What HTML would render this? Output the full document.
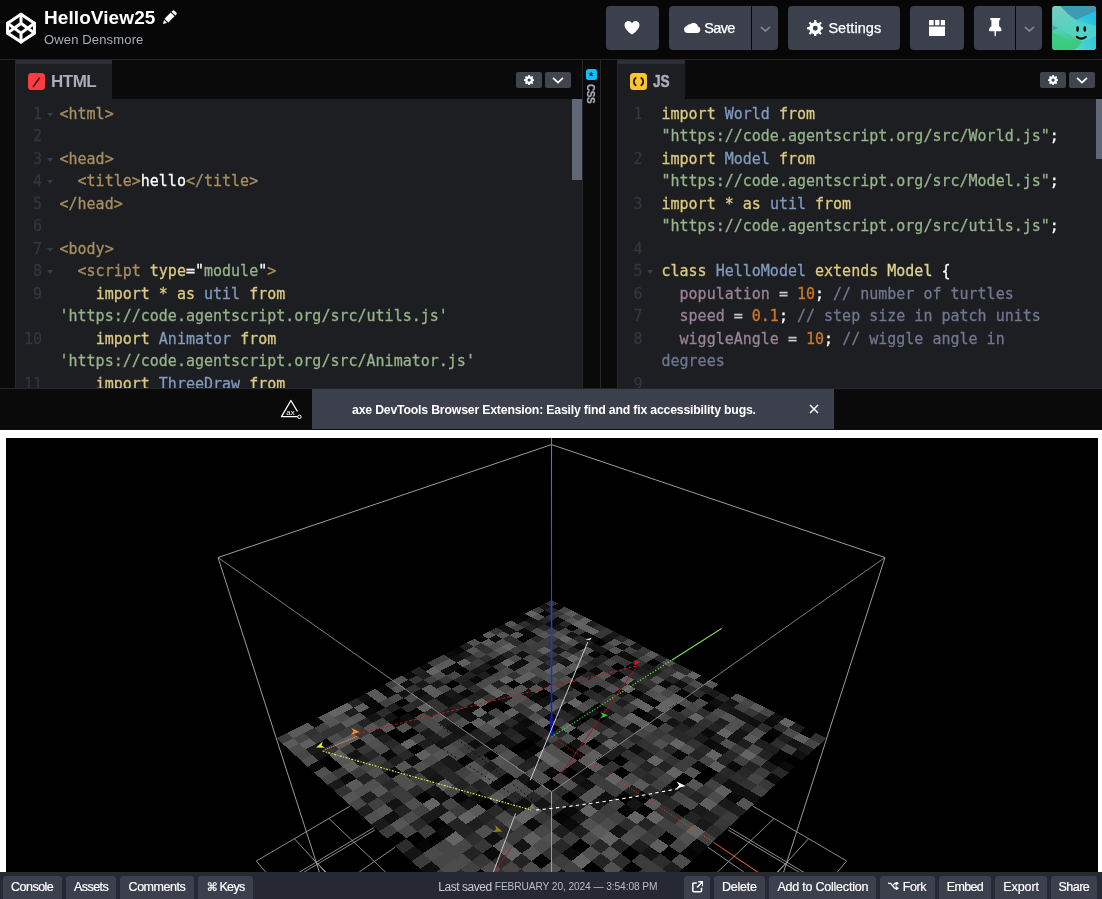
<!DOCTYPE html>
<html lang="en">
<head>
<meta charset="utf-8">
<title>HelloView25</title>
<style>
*{box-sizing:border-box;margin:0;padding:0}
html,body{width:1102px;height:899px;overflow:hidden;background:#0a0a0a;font-family:"Liberation Sans",sans-serif;color:#fff}
.code,.ln{-webkit-text-stroke:.28px currentColor}
#hdr,#edwrap,#banbar,#ftr{will-change:transform}
#hdr{position:absolute;left:0;top:0;width:1102px;height:60px;background:#070707;border-bottom:1px solid #25262b}
#logo{position:absolute;left:5px;top:12.3px;width:32px;height:32px}
#title{position:absolute;left:44px;top:5.5px;font-weight:bold;font-size:19px;line-height:24px;white-space:nowrap;letter-spacing:0.08px}
#author{position:absolute;left:44px;top:31.5px;font-size:13px;line-height:16px;color:#a9acba;white-space:nowrap;letter-spacing:0.15px}
.btn{position:absolute;top:6px;height:44px;background:#3c3f4c;border-radius:4px;color:#fff;font-size:14.5px;line-height:45px;white-space:nowrap;-webkit-text-stroke:.25px #fff}
.btn svg{position:absolute}
/* editors */
#edwrap{position:absolute;left:0;top:60px;width:1102px;height:329px;background:#0a0a0a;overflow:hidden;border-bottom:1px solid #25262b}
.ed{position:absolute;top:0;height:329px;background:#1d1e22;overflow:hidden}
.edbar{position:absolute;left:0;top:0;right:0;height:38.5px;background:#0a0a0a}
.tab{position:absolute;left:0;top:0;height:38.5px;background:#1d1e22;border-top:4px solid #2d2f36;color:#aaaebc;font-weight:bold;font-size:17px;line-height:36px;white-space:nowrap}
.tab .ic{position:absolute;left:12px;top:8.5px;width:17px;height:17px;border-radius:3.5px}
.sbtn{position:absolute;top:12px;height:16px;width:26px;background:#41444f;border-radius:2px}
.code{position:absolute;left:0;top:42.5px;font-family:"DejaVu Sans Mono","Liberation Mono",monospace;font-size:15px;line-height:22.5px;white-space:pre;color:#fff}
.ln{position:absolute;top:42.5px;font-family:"DejaVu Sans Mono","Liberation Mono",monospace;font-size:15px;line-height:22.5px;white-space:pre;color:#34363e;text-align:right}
.t{color:#a88f5f}.k{color:#ddca7e}.s{color:#96b38a}.v{color:#809bbd}.n{color:#d0782a}.c{color:#717790}.p{color:#9a8297}.a{color:#ddca7e}.w{color:#fff}.m{color:#e0d292}.o{color:#c8c8c8}
.fold{position:absolute;width:0;height:0;border-left:3.7px solid transparent;border-right:3.7px solid transparent;border-top:4.2px solid #3a3c44}
/* banner */
#banbar{position:absolute;left:0;top:389px;width:1102px;height:41px;background:#0a0a0a;border-bottom:1px solid #0e0e11}
#ban{position:absolute;left:312px;top:0;width:522px;height:40px;background:#3c3f4c;font-weight:bold;font-size:12.3px;letter-spacing:-.2px;line-height:42px;white-space:nowrap}
/* result */
#res{position:absolute;left:0;top:430px;width:1102px;height:442px;background:#fff}
#cv{position:absolute;left:6px;top:8px;width:1092px;height:434px;background:#000;overflow:hidden}
/* footer */
#ftr{position:absolute;left:0;top:872px;width:1102px;height:27px;background:#262833;border-top:2px solid #29292e}
.fb{position:absolute;top:1.5px;height:26px;background:#3c3f4c;border-radius:3px;color:#fff;font-size:12.5px;line-height:22px;white-space:nowrap;-webkit-text-stroke:.2px #fff}
</style>
</head>
<body>
<div id="hdr">
<svg id="logo" viewBox="0 0 100 100"><g fill="none" stroke="#fff" stroke-width="9.5" stroke-linejoin="round" stroke-linecap="round"><path d="M50 7L92 35V66L50 94L8 66V35Z"/><path d="M50 7V35M50 94V66M8 35L50 66L92 35M8 66L50 35L92 66"/></g></svg><svg style="position:absolute;left:162px;top:9px" width="16" height="16" viewBox="-1 -15 16 16"><g transform="rotate(-45)" fill="#fff"><path d="M0 0L3.6 -2.1V2.1Z"/><path d="M4.9 -2.7H13.600V2.7H4.9Z"/><path d="M14.6 -2.7H16.200Q17.5 -2.7 17.5 -1.400V1.400Q17.5 2.7 16.2 2.7H14.600Z"/></g></svg>
<div id="title">HelloView25</div>
<div id="author">Owen Densmore</div>

<div class="btn" style="left:605.5px;width:53.5px"><svg style="left:18.3px;top:15px" width="16" height="13.5" viewBox="0 0 16 13.5"><path d="M8 13.5C-1.8 6.8 -.4 1.2 3.4.2 5.6 -.4 7.3 .8 8 2.3 8.7 .8 10.4 -.4 12.6 .2 16.4 1.2 17.8 6.8 8 13.500z" fill="#fff"/></svg></div>
<div class="btn" style="left:669px;width:82.3px;border-radius:4px 0 0 4px"><svg style="left:15px;top:16.2px" width="17" height="11" viewBox="0 0 17 11"><path d="M3.6 11A3.6 3.6 0 0 1 2.9 3.9 3.1 3.1 0 0 1 6.2 2.3 4.6 4.6 0 0 1 14 4.6 3.3 3.3 0 0 1 13.6 11z" fill="#fff"/></svg><span style="position:absolute;left:35.2px;top:0;letter-spacing:-.6px">Save</span></div>
<div class="btn" style="left:752.2px;width:25.8px;border-radius:0 4px 4px 0"><svg style="left:7.5px;top:19.7px" width="11" height="7" viewBox="0 0 11 7"><path d="M.8 1l4.6 3.900L10 1" fill="none" stroke="#878b9b" stroke-width="1.5"/></svg></div>
<div class="btn" style="left:788.2px;width:111.8px"><svg style="left:18.7px;top:13.8px" width="16.5" height="16.5" viewBox="0 0 16 16"><path fill-rule="evenodd" d="M6.89 2.20L6.98 -0.04L9.02 -0.04L9.11 2.20L11.32 3.12L12.96 1.60L14.40 3.04L12.88 4.68L13.80 6.89L16.04 6.98L16.04 9.02L13.80 9.11L12.88 11.32L14.40 12.96L12.96 14.40L11.32 12.88L9.11 13.80L9.02 16.04L6.98 16.04L6.89 13.80L4.68 12.88L3.04 14.40L1.60 12.96L3.12 11.32L2.20 9.11L-0.04 9.02L-0.04 6.98L2.20 6.89L3.12 4.68L1.60 3.04L3.04 1.60L4.68 3.12ZM5.60 8.00a2.40 2.40 0 1 0 4.80 0a2.40 2.40 0 1 0 -4.80 0Z" fill="#fff"/></svg><span style="position:absolute;left:40.2px;top:0;letter-spacing:.07px">Settings</span></div>
<div class="btn" style="left:910px;width:54.2px"><svg style="left:18.8px;top:13.8px" width="16.5" height="16.4" viewBox="0 0 16.5 16.4"><path d="M.6 0h4.100v5.200H0V.6zM6.1 0h4.300v5.200H6.100zM11.8 0h4.100l.6.600v4.600h-4.700zM0 6.400h16.500v9q0 1-1 1H1q-1 0-1-1z" fill="#fff"/></svg></div>
<div class="btn" style="left:974px;width:41.2px;border-radius:4px 0 0 4px"><svg style="left:15px;top:12.300px" width="12.5" height="18.5" viewBox="0 0 12.5 18.5"><path d="M1.8 0H10.700Q11.2 0 11.2 .5V1.700Q11.2 2.2 10.7 2.200H10.100V8.300C11.6 9.2 12.5 10.6 12.5 12.200Q12.5 13.2 11.5 13.200H7V17.500L6.250 18.5 5.5 17.500V13.200H1Q0 13.2 0 12.200C0 10.6 .9 9.2 2.4 8.300V2.200H1.800Q1.3 2.2 1.3 1.700V.5Q1.3 0 1.8 0Z" fill="#fff"/></svg></div>
<div class="btn" style="left:1016px;width:26px;border-radius:0 4px 4px 0"><svg style="left:8px;top:20.3px" width="11" height="7" viewBox="0 0 11 7"><path d="M.8 1l4.6 3.900L10 1" fill="none" stroke="#878b9b" stroke-width="1.5"/></svg></div>
<svg style="position:absolute;left:1052px;top:6px;border-radius:3px" width="44.2" height="44" viewBox="0 0 44 44"><defs><linearGradient id="ag" x1="0" y1="0" x2="0.2" y2="1"><stop offset="0" stop-color="#7accc4"/><stop offset=".45" stop-color="#5fd0bc"/><stop offset="1" stop-color="#36c878"/></linearGradient><linearGradient id="ag2" x1="1" y1="0" x2="0" y2="1"><stop offset="0" stop-color="#16bdea"/><stop offset="1" stop-color="#58d8c8"/></linearGradient></defs><rect width="44" height="44" fill="url(#ag)"/><path d="M24 14L44 4V44H22L30 36z" fill="url(#ag2)"/><path d="M24 14L6 22 30 36 44 30V20z" fill="#56d6c6" opacity=".75"/><path d="M8 0H44V5L24 14 16 8z" fill="#3d9ab4"/><path d="M0 19L6 22 0 25z" fill="#4aa8a4"/><path d="M0 26L28 40 22 44H0z" fill="#39cc80" opacity=".8"/><ellipse cx="25.5" cy="23" rx="1.4" ry="2.9" fill="#08100f"/><ellipse cx="32.7" cy="23" rx="1.4" ry="2.9" fill="#08100f"/><path d="M24.7 30.800q4.5 3.6 9 0" fill="none" stroke="#08100f" stroke-width="2.2" stroke-linecap="round"/></svg>

</div>
<div id="edwrap">
<div class="ed" style="left:15px;width:567px;border-left:1px solid #26272c">
<div class="edbar"><div class="tab" style="width:96px"><span class="ic" style="background:#ff3c41"><svg width="17" height="17" viewBox="0 0 17 17" style="position:absolute;left:0;top:0"><path d="M4.9 14.100L11.7 4.7" stroke="#28090a" stroke-width="1.5" fill="none"/></svg></span><span style="position:absolute;left:35px;top:0;letter-spacing:-.5px">HTML</span></div>
<div class="sbtn" style="left:500px"><svg style="position:absolute;left:7.9px;top:2.9px" width="10.2" height="10.2" viewBox="0 0 16 16"><path fill-rule="evenodd" d="M6.53 1.87L6.73 -0.00L9.27 -0.00L9.47 1.87L11.29 2.63L12.76 1.45L14.55 3.24L13.37 4.71L14.13 6.53L16.00 6.73L16.00 9.27L14.13 9.47L13.37 11.29L14.55 12.76L12.76 14.55L11.29 13.37L9.47 14.13L9.27 16.00L6.73 16.00L6.53 14.13L4.71 13.37L3.24 14.55L1.45 12.76L2.63 11.29L1.87 9.47L-0.00 9.27L-0.00 6.73L1.87 6.53L2.63 4.71L1.45 3.24L3.24 1.45L4.71 2.63ZM5.50 8.00a2.50 2.50 0 1 0 5.00 0a2.50 2.50 0 1 0 -5.00 0Z" fill="#fff"/></svg></div>
<div class="sbtn" style="left:529px"><svg style="position:absolute;left:7px;top:4.5px" width="12" height="7" viewBox="0 0 12 7"><path d="M1 .9l5 4.700L11 .9" fill="none" stroke="#fff" stroke-width="1.8"/></svg></div>
</div>
<pre class="ln" style="left:0;width:26px">1
2
3
4
5
6
7
8
9

10

11
</pre><i class="fold" style="top:52.5px;left:30.6px"></i><i class="fold" style="top:97.5px;left:30.6px"></i><i class="fold" style="top:120.0px;left:30.6px"></i><i class="fold" style="top:187.5px;left:30.6px"></i><i class="fold" style="top:210.0px;left:30.6px"></i>
<pre class="code" style="left:43.5px"><span class="t">&lt;html&gt;</span>

<span class="t">&lt;head&gt;</span>
  <span class="t">&lt;title&gt;</span>hello<span class="t">&lt;/title&gt;</span>
<span class="t">&lt;/head&gt;</span>

<span class="t">&lt;body&gt;</span>
  <span class="t">&lt;script</span> <span class="a">type</span>="<span class="s">module</span>"<span class="t">&gt;</span>
    <span class="k">import</span> <span class="k">*</span> <span class="k">as</span> <span class="v">util</span> <span class="k">from</span>
<span class="s">'https://code.agentscript.org/src/utils.js'</span>
    <span class="k">import</span> <span class="v">Animator</span> <span class="k">from</span>
<span class="s">'https://code.agentscript.org/src/Animator.js'</span>
    <span class="k">import</span> <span class="v">ThreeDraw</span> <span class="k">from</span>
<span class="s">'https://code.agentscript.org/src/ThreeDraw.js'</span></pre>
<div style="position:absolute;left:556px;top:38.5px;width:10.5px;height:81px;background:#626778"></div>
</div><div class="ed" style="left:617px;width:489px;border-left:1px solid #26272c">
<div class="edbar"><div class="tab" style="width:67px"><span class="ic" style="background:#fcc633"><svg width="17" height="17" viewBox="0 0 17 17" style="position:absolute;left:0;top:0"><path d="M6.29 12.75A4.70 4.70 0 0 1 6.29 4.45M10.71 4.45A4.70 4.70 0 0 1 10.71 12.75" stroke="#231d00" stroke-width="1.8" fill="none"/></svg></span><span style="position:absolute;left:34.5px;top:0;display:inline-block;transform:scaleX(.8);transform-origin:0 0;-webkit-text-stroke:.5px #aaaebc">JS</span></div>
<div class="sbtn" style="left:422.3px"><svg style="position:absolute;left:7.9px;top:2.9px" width="10.2" height="10.2" viewBox="0 0 16 16"><path fill-rule="evenodd" d="M6.53 1.87L6.73 -0.00L9.27 -0.00L9.47 1.87L11.29 2.63L12.76 1.45L14.55 3.24L13.37 4.71L14.13 6.53L16.00 6.73L16.00 9.27L14.13 9.47L13.37 11.29L14.55 12.76L12.76 14.55L11.29 13.37L9.47 14.13L9.27 16.00L6.73 16.00L6.53 14.13L4.71 13.37L3.24 14.55L1.45 12.76L2.63 11.29L1.87 9.47L-0.00 9.27L-0.00 6.73L1.87 6.53L2.63 4.71L1.45 3.24L3.24 1.45L4.71 2.63ZM5.50 8.00a2.50 2.50 0 1 0 5.00 0a2.50 2.50 0 1 0 -5.00 0Z" fill="#fff"/></svg></div>
<div class="sbtn" style="left:451px"><svg style="position:absolute;left:7px;top:4.5px" width="12" height="7" viewBox="0 0 12 7"><path d="M1 .9l5 4.700L11 .9" fill="none" stroke="#fff" stroke-width="1.8"/></svg></div>
</div>
<pre class="ln" style="left:0;width:24.5px">1

2

3

4
5
6
7
8

9
10</pre><i class="fold" style="top:210.0px;left:29.1px"></i>
<pre class="code" style="left:43.5px"><span class="k">import</span> <span class="v">World</span> <span class="k">from</span>
<span class="s">"https://code.agentscript.org/src/World.js"</span>;
<span class="k">import</span> <span class="v">Model</span> <span class="k">from</span>
<span class="s">"https://code.agentscript.org/src/Model.js"</span>;
<span class="k">import</span> <span class="k">*</span> <span class="k">as</span> <span class="v">util</span> <span class="k">from</span>
<span class="s">"https://code.agentscript.org/src/utils.js"</span>;

<span class="k">class</span> <span class="v">HelloModel</span> <span class="k">extends</span> <span class="m">Model</span> {
  <span class="p">population</span> <span class="o">=</span> <span class="n">10</span>; <span class="c">// number of turtles</span>
  <span class="p">speed</span> <span class="o">=</span> <span class="n">0.1</span>; <span class="c">// step size in patch units</span>
  <span class="p">wiggleAngle</span> <span class="o">=</span> <span class="n">10</span>; <span class="c">// wiggle angle in</span>
<span class="c">degrees</span>

  <span class="c">// ======================</span></pre>
<div style="position:absolute;left:478px;top:38.5px;width:8px;height:60.5px;background:#626778"></div>
</div><div style="position:absolute;left:582px;top:0;width:19px;height:329px;background:#0a0a0a;border-left:1px solid #26272c;border-right:1px solid #26272c">
<span style="position:absolute;left:2.500px;top:8.5px;width:11.500px;height:11.500px;border-radius:2.500px;background:#0ebeff;color:#0a1a22;font-size:11px;line-height:15px;text-align:center;font-weight:bold">*</span>
<span style="position:absolute;left:1.200px;top:24px;writing-mode:vertical-rl;font-weight:bold;font-size:10px;line-height:13px;color:#aaaebc;letter-spacing:-.4px;-webkit-text-stroke:.25px #aaaebc">CSS</span>
</div>
</div>
<div id="banbar"><svg style="position:absolute;left:280px;top:9px" width="23" height="22" viewBox="0 0 23 22"><path d="M17.5 13.500L10.9 2.500L1.5 18.600H17.6" fill="none" stroke="#fff" stroke-width="1.3" stroke-linejoin="round"/><circle cx="19.4" cy="18.8" r="1.7" fill="none" stroke="#fff" stroke-width="1"/><text x="6.3" y="16.8" font-family="Liberation Sans,sans-serif" font-size="7.8" fill="#fff">ax</text></svg>
<div id="ban"><span style="position:absolute;left:40px;top:0">axe DevTools Browser Extension: Easily find and fix accessibility bugs.</span><svg style="position:absolute;left:497px;top:15px" width="10" height="10" viewBox="0 0 10 10"><path d="M1 1l8 8M9 1l-8 8" stroke="#fff" stroke-width="1.5" fill="none"/></svg></div></div>
<div id="res"><div id="cv"><svg width="1092" height="434" viewBox="6 438 1092 434" style="position:absolute;left:0;top:0;display:block">
<g shape-rendering="crispEdges">
<path fill="#000000" d="M463.1 666.9L469.8 671.2L461.7 675.5L455.0 671.2ZM453.5 679.9L460.3 684.3L451.9 688.8L445.1 684.3ZM401.1 707.7L407.8 712.6L398.6 717.6L391.9 712.6ZM398.6 717.6L405.4 722.6L395.9 727.8L389.1 722.6ZM329.1 755.0L335.7 760.7L325.0 766.6L318.4 760.7ZM395.9 727.8L402.9 733.1L393.2 738.4L386.3 733.1ZM335.7 760.7L342.4 766.6L331.7 772.5L325.0 766.6ZM412.3 727.8L419.4 733.1L409.9 738.4L402.9 733.1ZM402.9 733.1L409.9 738.4L400.2 743.8L393.2 738.4ZM513.8 679.9L521.1 684.3L513.2 688.8L505.9 684.3ZM600.4 638.9L607.8 642.7L601.1 646.6L593.7 642.7ZM497.0 698.1L504.4 702.8L496.1 707.7L488.7 702.8ZM488.7 702.8L496.1 707.7L487.6 712.6L480.3 707.7ZM417.0 743.8L424.3 749.4L414.6 755.0L407.4 749.4ZM504.4 702.8L511.9 707.7L503.6 712.6L496.1 707.7ZM470.3 722.6L477.8 727.8L468.9 733.1L461.4 727.8ZM543.8 688.8L551.5 693.4L543.7 698.1L536.1 693.4ZM617.3 662.7L625.2 666.9L618.3 671.2L610.4 666.9ZM581.9 684.3L589.8 688.8L582.4 693.4L574.5 688.8ZM582.4 693.4L590.4 698.1L582.9 702.8L574.9 698.1ZM492.2 749.4L500.2 755.0L491.1 760.7L483.1 755.0ZM551.5 722.6L559.7 727.8L551.5 733.1L543.3 727.8ZM526.5 738.4L534.7 743.8L526.1 749.4L517.9 743.8ZM517.9 743.8L526.1 749.4L517.3 755.0L509.1 749.4ZM583.4 712.6L591.7 717.6L584.0 722.6L575.6 717.6ZM398.1 831.4L406.3 838.6L395.0 846.0L386.9 838.6ZM599.4 712.6L607.8 717.6L600.2 722.6L591.7 717.6ZM507.5 772.5L516.0 778.6L506.7 784.8L498.3 778.6ZM417.3 831.4L425.6 838.6L414.6 846.0L406.3 838.6ZM487.6 797.5L496.2 804.0L486.4 810.7L477.8 804.0ZM436.5 831.4L445.0 838.6L434.1 846.0L425.6 838.6ZM638.6 707.7L647.3 712.6L640.0 717.6L631.3 712.6ZM593.2 738.4L601.9 743.8L593.9 749.4L585.1 743.8ZM568.9 766.6L577.9 772.5L569.2 778.6L560.3 772.5ZM677.1 702.8L686.1 707.7L679.2 712.6L670.2 707.7ZM718.7 684.3L727.7 688.8L721.4 693.4L712.4 688.8ZM706.0 693.4L715.0 698.1L708.5 702.8L699.4 698.1ZM619.9 755.0L629.2 760.7L621.2 766.6L611.9 760.7ZM569.6 791.0L578.9 797.5L569.9 804.0L560.6 797.5ZM621.2 766.6L630.6 772.5L622.5 778.6L613.0 772.5ZM623.8 791.0L633.6 797.5L625.2 804.0L615.4 797.5ZM641.9 791.0L651.9 797.5L643.7 804.0L633.6 797.5ZM580.5 838.6L590.6 846.0L581.2 853.5L571.1 846.0ZM675.7 778.6L685.8 784.8L678.1 791.0L667.9 784.8ZM708.3 766.6L718.5 772.5L711.2 778.6L700.9 772.5ZM700.9 772.5L711.2 778.6L703.7 784.8L693.5 778.6ZM591.4 861.2L602.0 869.0L592.3 877.0L581.8 869.0ZM766.2 733.1L776.4 738.4L770.0 743.8L759.8 738.4ZM629.8 846.0L640.5 853.5L631.4 861.2L620.7 853.5ZM805.3 727.8L815.8 733.1L809.7 738.4L799.2 733.1ZM791.0 755.0L801.8 760.7L795.4 766.6L784.6 760.7Z"/>
<path fill="#050505" d="M524.9 613.7L531.4 617.1L524.5 620.6L518.0 617.1ZM482.1 635.2L488.6 638.9L481.1 642.7L474.6 638.9ZM459.3 646.6L465.8 650.6L457.9 654.6L451.5 650.6ZM384.3 684.3L390.6 688.8L381.6 693.4L375.3 688.8ZM318.1 717.6L324.2 722.6L314.1 727.8L308.0 722.6ZM558.0 603.6L564.6 606.9L558.1 610.3L551.5 606.9ZM544.9 610.3L551.5 613.7L544.8 617.1L538.2 613.7ZM372.4 698.1L378.8 702.8L369.4 707.7L363.1 702.8ZM378.8 702.8L385.3 707.7L375.9 712.6L369.4 707.7ZM523.8 635.2L530.5 638.9L523.3 642.7L516.6 638.9ZM403.6 698.1L410.2 702.8L401.1 707.7L394.5 702.8ZM571.9 624.2L578.9 627.8L572.2 631.4L565.2 627.8ZM492.6 666.9L499.5 671.2L491.7 675.5L484.7 671.2ZM416.9 707.7L423.8 712.6L414.7 717.6L407.8 712.6ZM594.4 650.6L601.9 654.6L595.0 658.6L587.5 654.6ZM394.7 766.6L402.1 772.5L391.8 778.6L384.5 772.5ZM608.7 650.6L616.3 654.6L609.5 658.6L601.9 654.6ZM581.0 666.9L588.6 671.2L581.4 675.5L573.8 671.2ZM466.0 755.0L473.8 760.7L464.4 766.6L456.6 760.7ZM618.3 671.2L626.3 675.5L619.4 679.9L611.3 675.5ZM424.9 791.0L432.8 797.5L422.5 804.0L414.6 797.5ZM653.1 658.6L661.1 662.7L654.6 666.9L646.5 662.7ZM535.0 733.1L543.2 738.4L534.7 743.8L526.5 738.4ZM598.6 702.8L606.9 707.7L599.4 712.6L591.1 707.7ZM534.7 743.8L543.0 749.4L534.4 755.0L526.1 749.4ZM461.1 791.0L469.4 797.5L459.3 804.0L451.1 797.5ZM635.8 688.8L644.2 693.4L637.2 698.1L628.7 693.4ZM438.7 817.4L447.1 824.4L436.5 831.4L428.1 824.4ZM568.3 743.8L576.9 749.4L568.6 755.0L560.0 749.4ZM425.6 838.6L434.1 846.0L423.0 853.5L414.6 846.0ZM652.7 698.1L661.4 702.8L654.4 707.7L645.7 702.8ZM681.7 688.8L690.5 693.4L683.9 698.1L675.1 693.4ZM551.5 778.6L560.5 784.8L551.5 791.0L542.5 784.8ZM727.7 688.8L736.9 693.4L730.6 698.1L721.4 693.4ZM708.5 702.8L717.7 707.7L711.1 712.6L701.9 707.7ZM560.8 810.7L570.3 817.4L561.0 824.4L551.5 817.4ZM480.9 869.0L490.3 877.0L479.3 885.2L469.9 877.0ZM541.6 853.5L551.5 861.2L541.4 869.0L531.5 861.2ZM625.2 804.0L635.2 810.7L626.7 817.4L616.6 810.7ZM683.4 772.5L693.5 778.6L685.8 784.8L675.7 778.6ZM643.7 804.0L653.9 810.7L645.5 817.4L635.2 810.7ZM772.6 727.8L782.7 733.1L776.4 738.4L766.2 733.1ZM680.5 804.0L691.1 810.7L683.1 817.4L672.5 810.7ZM666.5 831.4L677.4 838.6L668.9 846.0L658.0 838.6ZM631.4 861.2L642.3 869.0L633.1 877.0L622.1 869.0ZM780.4 749.4L791.0 755.0L784.6 760.7L773.9 755.0ZM773.9 755.0L784.6 760.7L778.0 766.6L767.3 760.7ZM668.9 846.0L680.0 853.5L671.3 861.2L660.2 853.5ZM688.4 846.0L699.8 853.5L691.3 861.2L680.0 853.5Z"/>
<path fill="#0a0a0a" d="M518.0 617.1L524.5 620.6L517.6 624.2L511.1 620.6ZM451.5 650.6L457.9 654.6L449.9 658.6L443.5 654.6ZM427.2 662.7L433.6 666.9L425.3 671.2L418.9 666.9ZM410.5 671.2L416.8 675.5L408.2 679.9L401.9 675.5ZM390.6 688.8L397.0 693.4L388.0 698.1L381.6 693.4ZM524.1 627.8L530.8 631.4L523.8 635.2L517.1 631.4ZM456.5 662.7L463.1 666.9L455.0 671.2L448.4 666.9ZM369.4 707.7L375.9 712.6L366.4 717.6L359.9 712.6ZM558.2 617.1L565.0 620.6L558.3 624.2L551.5 620.6ZM551.5 620.6L558.3 624.2L551.5 627.8L544.7 624.2ZM530.8 631.4L537.6 635.2L530.5 638.9L523.8 635.2ZM326.6 738.4L333.0 743.8L322.6 749.4L316.2 743.8ZM493.5 658.6L500.3 662.7L492.6 666.9L485.7 662.7ZM476.7 675.5L483.6 679.9L475.5 684.3L468.6 679.9ZM318.4 760.7L325.0 766.6L314.1 772.5L307.6 766.6ZM467.2 688.8L474.3 693.4L465.8 698.1L458.8 693.4ZM585.9 631.4L593.1 635.2L586.4 638.9L579.2 635.2ZM593.1 635.2L600.4 638.9L593.7 642.7L586.4 638.9ZM473.0 702.8L480.3 707.7L471.7 712.6L464.4 707.7ZM390.4 749.4L397.5 755.0L387.5 760.7L380.4 755.0ZM349.3 772.5L356.3 778.6L345.5 784.8L338.6 778.6ZM536.1 693.4L543.7 698.1L535.8 702.8L528.1 698.1ZM595.7 666.9L603.5 671.2L596.4 675.5L588.6 671.2ZM574.1 679.9L581.9 684.3L574.5 688.8L566.7 684.3ZM630.7 654.6L638.5 658.6L631.9 662.7L624.0 658.6ZM527.4 717.6L535.3 722.6L526.9 727.8L519.0 722.6ZM493.2 738.4L501.1 743.8L492.2 749.4L484.3 743.8ZM631.9 662.7L639.9 666.9L633.2 671.2L625.2 666.9ZM597.1 684.3L605.1 688.8L597.8 693.4L589.8 688.8ZM567.2 702.8L575.2 707.7L567.5 712.6L559.4 707.7ZM551.5 712.6L559.5 717.6L551.5 722.6L543.5 717.6ZM526.9 727.8L535.0 733.1L526.5 738.4L518.5 733.1ZM575.6 717.6L584.0 722.6L576.1 727.8L567.7 722.6ZM526.1 749.4L534.4 755.0L525.6 760.7L517.3 755.0ZM576.1 727.8L584.5 733.1L576.5 738.4L568.0 733.1ZM498.3 778.6L506.7 784.8L497.3 791.0L488.8 784.8ZM479.2 791.0L487.6 797.5L477.8 804.0L469.4 797.5ZM664.6 679.9L673.1 684.3L666.4 688.8L657.9 684.3ZM447.1 824.4L455.6 831.4L445.0 838.6L436.5 831.4ZM576.9 749.4L585.7 755.0L577.4 760.7L568.6 755.0ZM551.5 766.6L560.3 772.5L551.5 778.6L542.7 772.5ZM533.8 778.6L542.5 784.8L533.4 791.0L524.6 784.8ZM505.9 797.5L514.6 804.0L505.0 810.7L496.2 804.0ZM701.1 675.5L709.8 679.9L703.5 684.3L694.8 679.9ZM647.3 712.6L656.1 717.6L648.9 722.6L640.0 717.6ZM690.5 693.4L699.4 698.1L692.8 702.8L683.9 698.1ZM656.1 717.6L665.1 722.6L657.9 727.8L648.9 722.6ZM602.8 755.0L611.9 760.7L603.8 766.6L594.7 760.7ZM586.3 766.6L595.5 772.5L587.0 778.6L577.9 772.5ZM532.7 817.4L542.0 824.4L532.3 831.4L523.0 824.4ZM492.8 846.0L502.1 853.5L491.6 861.2L482.3 853.5ZM569.9 804.0L579.4 810.7L570.3 817.4L560.8 810.7ZM570.3 817.4L580.0 824.4L570.7 831.4L561.0 824.4ZM707.1 727.8L716.7 733.1L709.8 738.4L700.1 733.1ZM678.7 749.4L688.4 755.0L681.0 760.7L671.3 755.0ZM709.8 738.4L719.6 743.8L712.6 749.4L702.8 743.8ZM571.1 846.0L581.2 853.5L571.5 861.2L561.4 853.5ZM698.2 760.7L708.3 766.6L700.9 772.5L690.9 766.6ZM768.8 717.6L778.8 722.6L772.6 727.8L762.6 722.6ZM732.8 760.7L743.1 766.6L736.1 772.5L725.7 766.6ZM602.0 869.0L612.7 877.0L603.1 885.2L592.3 877.0ZM732.3 791.0L743.2 797.5L735.8 804.0L724.9 797.5ZM784.6 760.7L795.4 766.6L788.9 772.5L778.0 766.6ZM771.3 772.5L782.2 778.6L775.4 784.8L764.4 778.6ZM696.7 838.6L708.0 846.0L699.8 853.5L688.4 846.0Z"/>
<path fill="#0f0f0f" d="M504.0 624.2L510.5 627.8L503.3 631.4L496.8 627.8ZM366.1 693.4L372.4 698.1L363.1 702.8L356.8 698.1ZM496.0 635.2L502.6 638.9L495.2 642.7L488.6 638.9ZM457.9 654.6L464.5 658.6L456.5 662.7L449.9 658.6ZM408.2 679.9L414.7 684.3L405.9 688.8L399.5 684.3ZM448.4 666.9L455.0 671.2L446.8 675.5L440.2 671.2ZM421.3 688.8L427.9 693.4L419.1 698.1L412.5 693.4ZM522.9 650.6L529.9 654.6L522.5 658.6L515.5 654.6ZM443.4 693.4L450.3 698.1L441.6 702.8L434.7 698.1ZM407.8 712.6L414.7 717.6L405.4 722.6L398.6 717.6ZM359.9 738.4L366.6 743.8L356.5 749.4L349.8 743.8ZM522.5 658.6L529.6 662.7L522.0 666.9L515.0 662.7ZM515.0 662.7L522.0 666.9L514.4 671.2L507.3 666.9ZM450.3 698.1L457.3 702.8L448.6 707.7L441.6 702.8ZM579.7 642.7L587.0 646.6L580.1 650.6L572.8 646.6ZM464.4 707.7L471.7 712.6L463.0 717.6L455.7 712.6ZM471.7 712.6L479.1 717.6L470.3 722.6L463.0 717.6ZM414.6 755.0L422.0 760.7L412.1 766.6L404.8 760.7ZM621.9 642.7L629.5 646.6L623.0 650.6L615.3 646.6ZM573.8 671.2L581.4 675.5L574.1 679.9L566.5 675.5ZM623.0 650.6L630.7 654.6L624.0 658.6L616.3 654.6ZM551.5 693.4L559.3 698.1L551.5 702.8L543.7 698.1ZM476.5 738.4L484.3 743.8L475.2 749.4L467.5 743.8ZM519.0 722.6L526.9 727.8L518.5 733.1L510.6 727.8ZM502.0 733.1L509.8 738.4L501.1 743.8L493.2 738.4ZM509.8 738.4L517.9 743.8L509.1 749.4L501.1 743.8ZM393.3 810.7L401.2 817.4L390.2 824.4L382.4 817.4ZM443.0 791.0L451.1 797.5L440.9 804.0L432.8 797.5ZM679.7 679.9L688.3 684.3L681.7 688.8L673.1 684.3ZM524.1 797.5L533.1 804.0L523.6 810.7L514.6 804.0ZM431.7 861.2L440.5 869.0L429.1 877.0L420.3 869.0ZM494.0 831.4L503.1 838.6L492.8 846.0L483.7 838.6ZM635.5 743.8L644.8 749.4L637.0 755.0L627.8 749.4ZM587.0 778.6L596.3 784.8L587.7 791.0L578.4 784.8ZM715.0 698.1L724.2 702.8L717.7 707.7L708.5 702.8ZM605.7 791.0L615.4 797.5L606.8 804.0L597.1 797.5ZM752.7 717.6L762.6 722.6L756.2 727.8L746.3 722.6ZM719.6 743.8L729.5 749.4L722.6 755.0L712.6 749.4ZM561.6 869.0L571.9 877.0L561.8 885.2L551.5 877.0ZM775.0 712.6L784.9 717.6L778.8 722.6L768.8 717.6ZM729.0 778.6L739.6 784.8L732.3 791.0L721.7 784.8ZM739.6 784.8L750.4 791.0L743.2 797.5L732.3 791.0ZM797.4 749.4L808.1 755.0L801.8 760.7L791.0 755.0ZM750.4 791.0L761.4 797.5L754.2 804.0L743.2 797.5Z"/>
<path fill="#141414" d="M545.0 603.6L551.5 606.9L544.9 610.3L538.4 606.9ZM531.4 617.1L538.0 620.6L531.1 624.2L524.5 620.6ZM510.5 627.8L517.1 631.4L509.9 635.2L503.3 631.4ZM405.9 688.8L412.5 693.4L403.6 698.1L397.0 693.4ZM375.9 712.6L382.5 717.6L372.9 722.6L366.4 717.6ZM558.3 624.2L565.2 627.8L558.4 631.4L551.5 627.8ZM501.1 654.6L508.0 658.6L500.3 662.7L493.5 658.6ZM477.8 666.9L484.7 671.2L476.7 675.5L469.8 671.2ZM391.9 712.6L398.6 717.6L389.1 722.6L382.5 717.6ZM322.6 749.4L329.1 755.0L318.4 760.7L312.0 755.0ZM379.6 727.8L386.3 733.1L376.6 738.4L369.8 733.1ZM572.2 631.4L579.2 635.2L572.5 638.9L565.4 635.2ZM458.8 693.4L465.8 698.1L457.3 702.8L450.3 698.1ZM356.5 749.4L363.3 755.0L353.0 760.7L346.2 755.0ZM607.0 635.2L614.4 638.9L607.8 642.7L600.4 638.9ZM593.7 642.7L601.1 646.6L594.4 650.6L587.0 646.6ZM566.0 658.6L573.4 662.7L566.2 666.9L558.8 662.7ZM528.9 679.9L536.3 684.3L528.5 688.8L521.1 684.3ZM505.2 693.4L512.6 698.1L504.4 702.8L497.0 698.1ZM454.1 722.6L461.4 727.8L452.4 733.1L445.1 727.8ZM601.1 646.6L608.7 650.6L601.9 654.6L594.4 650.6ZM544.0 679.9L551.5 684.3L543.8 688.8L536.3 684.3ZM528.5 688.8L536.1 693.4L528.1 698.1L520.6 693.4ZM461.4 727.8L468.9 733.1L459.9 738.4L452.4 733.1ZM443.2 738.4L450.7 743.8L441.3 749.4L433.8 743.8ZM636.0 642.7L643.7 646.6L637.2 650.6L629.5 646.6ZM543.7 698.1L551.5 702.8L543.6 707.7L535.8 702.8ZM519.6 712.6L527.4 717.6L519.0 722.6L511.3 717.6ZM502.8 722.6L510.6 727.8L502.0 733.1L494.2 727.8ZM437.2 772.5L445.0 778.6L435.1 784.8L427.3 778.6ZM396.3 797.5L404.1 804.0L393.3 810.7L385.6 804.0ZM435.1 784.8L443.0 791.0L432.8 797.5L424.9 791.0ZM620.5 688.8L628.7 693.4L621.6 698.1L613.3 693.4ZM591.1 707.7L599.4 712.6L591.7 717.6L583.4 712.6ZM469.4 797.5L477.8 804.0L467.8 810.7L459.3 804.0ZM644.2 693.4L652.7 698.1L645.7 702.8L637.2 698.1ZM607.8 717.6L616.4 722.6L608.8 727.8L600.2 722.6ZM576.5 738.4L585.1 743.8L576.9 749.4L568.3 743.8ZM525.1 772.5L533.8 778.6L524.6 784.8L516.0 778.6ZM414.6 846.0L423.0 853.5L411.7 861.2L403.2 853.5ZM632.7 722.6L641.6 727.8L634.1 733.1L625.2 727.8ZM577.4 760.7L586.3 766.6L577.9 772.5L568.9 766.6ZM577.9 772.5L587.0 778.6L578.4 784.8L569.2 778.6ZM542.4 797.5L551.5 804.0L542.2 810.7L533.1 804.0ZM672.2 717.6L681.4 722.6L674.3 727.8L665.1 722.6ZM688.3 717.6L697.6 722.6L690.7 727.8L681.4 722.6ZM522.5 838.6L531.9 846.0L521.8 853.5L512.4 846.0ZM730.6 698.1L739.9 702.8L733.6 707.7L724.2 702.8ZM733.6 707.7L743.1 712.6L736.6 717.6L727.1 712.6ZM743.1 712.6L752.7 717.6L746.3 722.6L736.6 717.6ZM633.6 797.5L643.7 804.0L635.2 810.7L625.2 804.0ZM739.8 727.8L749.7 733.1L743.1 738.4L733.2 733.1ZM733.2 733.1L743.1 738.4L736.4 743.8L726.4 738.4ZM667.9 784.8L678.1 791.0L670.2 797.5L660.0 791.0ZM617.9 824.4L628.2 831.4L619.3 838.6L609.0 831.4ZM649.3 846.0L660.2 853.5L651.4 861.2L640.5 853.5ZM793.1 738.4L803.6 743.8L797.4 749.4L786.8 743.8Z"/>
<path fill="#191919" d="M465.8 650.6L472.3 654.6L464.5 658.6L457.9 654.6ZM538.0 620.6L544.7 624.2L537.8 627.8L531.1 624.2ZM423.3 679.9L429.9 684.3L421.3 688.8L414.7 684.3ZM438.4 679.9L445.1 684.3L436.6 688.8L429.9 684.3ZM316.2 743.8L322.6 749.4L312.0 755.0L305.6 749.4ZM485.7 662.7L492.6 666.9L484.7 671.2L477.8 666.9ZM427.9 693.4L434.7 698.1L425.9 702.8L419.1 698.1ZM451.9 688.8L458.8 693.4L450.3 698.1L443.4 693.4ZM414.7 717.6L421.6 722.6L412.3 727.8L405.4 722.6ZM558.6 646.6L565.8 650.6L558.7 654.6L551.5 650.6ZM428.7 727.8L435.9 733.1L426.5 738.4L419.4 733.1ZM338.6 778.6L345.5 784.8L334.5 791.0L327.6 784.8ZM613.5 631.4L620.9 635.2L614.4 638.9L607.0 635.2ZM487.6 712.6L495.2 717.6L486.6 722.6L479.1 717.6ZM452.4 733.1L459.9 738.4L450.7 743.8L443.2 738.4ZM448.8 755.0L456.6 760.7L447.0 766.6L439.3 760.7ZM429.6 766.6L437.2 772.5L427.3 778.6L419.6 772.5ZM456.6 760.7L464.4 766.6L454.8 772.5L447.0 766.6ZM611.3 675.5L619.4 679.9L612.3 684.3L604.3 679.9ZM382.4 817.4L390.2 824.4L379.0 831.4L371.2 824.4ZM646.5 662.7L654.6 666.9L648.0 671.2L639.9 666.9ZM575.2 707.7L583.4 712.6L575.6 717.6L567.5 712.6ZM543.2 738.4L551.5 743.8L543.0 749.4L534.7 743.8ZM440.9 804.0L449.1 810.7L438.7 817.4L430.5 810.7ZM430.5 810.7L438.7 817.4L428.1 824.4L419.9 817.4ZM606.9 707.7L615.4 712.6L607.8 717.6L599.4 712.6ZM712.4 688.8L721.4 693.4L715.0 698.1L706.0 693.4ZM724.2 702.8L733.6 707.7L727.1 712.6L717.7 707.7ZM597.1 797.5L606.8 804.0L598.0 810.7L588.4 804.0ZM579.4 810.7L589.1 817.4L580.0 824.4L570.3 817.4ZM700.1 733.1L709.8 738.4L702.8 743.8L693.1 738.4ZM698.9 804.0L709.7 810.7L701.8 817.4L691.1 810.7ZM767.3 760.7L778.0 766.6L771.3 772.5L760.6 766.6ZM724.9 797.5L735.8 804.0L728.3 810.7L717.4 804.0ZM701.8 817.4L712.8 824.4L704.9 831.4L693.9 824.4ZM803.6 743.8L814.3 749.4L808.1 755.0L797.4 749.4Z"/>
<path fill="#1e1e1e" d="M467.0 642.7L473.5 646.6L465.8 650.6L459.3 646.6ZM425.3 671.2L431.8 675.5L423.3 679.9L416.8 675.5ZM353.6 707.7L359.9 712.6L350.3 717.6L344.0 712.6ZM394.5 702.8L401.1 707.7L391.9 712.6L385.3 707.7ZM484.7 671.2L491.7 675.5L483.6 679.9L476.7 675.5ZM468.6 679.9L475.5 684.3L467.2 688.8L460.3 684.3ZM591.9 620.6L599.0 624.2L592.5 627.8L585.4 624.2ZM386.3 733.1L393.2 738.4L383.4 743.8L376.6 738.4ZM482.5 688.8L489.7 693.4L481.4 698.1L474.3 693.4ZM448.6 707.7L455.7 712.6L446.9 717.6L439.8 712.6ZM363.3 755.0L370.2 760.7L359.9 766.6L353.0 760.7ZM558.7 654.6L566.0 658.6L558.8 662.7L551.5 658.6ZM544.2 662.7L551.5 666.9L544.1 671.2L536.8 666.9ZM446.9 717.6L454.1 722.6L445.1 727.8L437.9 722.6ZM435.9 733.1L443.2 738.4L433.8 743.8L426.5 738.4ZM426.5 738.4L433.8 743.8L424.3 749.4L417.0 743.8ZM397.5 755.0L404.8 760.7L394.7 766.6L387.5 760.7ZM595.0 658.6L602.7 662.7L595.7 666.9L588.0 662.7ZM477.8 727.8L485.4 733.1L476.5 738.4L468.9 733.1ZM370.7 791.0L378.1 797.5L367.2 804.0L359.8 797.5ZM566.7 684.3L574.5 688.8L566.9 693.4L559.2 688.8ZM367.2 804.0L374.7 810.7L363.6 817.4L356.1 810.7ZM639.9 666.9L648.0 671.2L641.3 675.5L633.2 671.2ZM605.1 688.8L613.3 693.4L606.0 698.1L597.8 693.4ZM491.1 760.7L499.2 766.6L490.0 772.5L481.8 766.6ZM654.6 666.9L662.8 671.2L656.2 675.5L648.0 671.2ZM634.4 679.9L642.7 684.3L635.8 688.8L627.5 684.3ZM621.6 698.1L630.0 702.8L622.7 707.7L614.3 702.8ZM534.4 755.0L542.9 760.7L534.1 766.6L525.6 760.7ZM476.3 817.4L485.1 824.4L474.8 831.4L466.1 824.4ZM654.4 707.7L663.2 712.6L656.1 717.6L647.3 712.6ZM514.6 804.0L523.6 810.7L513.9 817.4L505.0 810.7ZM703.5 684.3L712.4 688.8L706.0 693.4L697.1 688.8ZM618.7 743.8L627.8 749.4L619.9 755.0L610.8 749.4ZM610.8 749.4L619.9 755.0L611.9 760.7L602.8 755.0ZM578.4 784.8L587.7 791.0L578.9 797.5L569.6 791.0ZM644.8 749.4L654.2 755.0L646.4 760.7L637.0 755.0ZM578.9 797.5L588.4 804.0L579.4 810.7L569.9 804.0ZM561.0 824.4L570.7 831.4L561.2 838.6L551.5 831.4ZM720.5 717.6L730.1 722.6L723.4 727.8L713.9 722.6ZM632.1 784.8L641.9 791.0L633.6 797.5L623.8 791.0ZM580.0 824.4L589.8 831.4L580.5 838.6L570.7 831.4ZM716.7 733.1L726.4 738.4L719.6 743.8L709.8 738.4ZM743.1 738.4L753.2 743.8L746.5 749.4L736.4 743.8ZM759.8 738.4L770.0 743.8L763.5 749.4L753.2 743.8ZM638.6 838.6L649.3 846.0L640.5 853.5L629.8 846.0ZM795.0 722.6L805.3 727.8L799.2 733.1L788.9 727.8ZM782.7 733.1L793.1 738.4L786.8 743.8L776.4 738.4ZM770.0 743.8L780.4 749.4L773.9 755.0L763.5 749.4ZM622.1 869.0L633.1 877.0L623.7 885.2L612.7 877.0ZM709.7 810.7L720.6 817.4L712.8 824.4L701.8 817.4ZM735.8 804.0L746.9 810.7L739.4 817.4L728.3 810.7ZM671.3 861.2L682.7 869.0L673.9 877.0L662.5 869.0Z"/>
<path fill="#232323" d="M418.9 666.9L425.3 671.2L416.8 675.5L410.5 671.2ZM356.8 698.1L363.1 702.8L353.6 707.7L347.4 702.8ZM551.5 606.9L558.1 610.3L551.5 613.7L544.9 610.3ZM544.8 617.1L551.5 620.6L544.7 624.2L538.0 620.6ZM531.1 624.2L537.8 627.8L530.8 631.4L524.1 627.8ZM366.4 717.6L372.9 722.6L363.2 727.8L356.7 722.6ZM508.6 650.6L515.5 654.6L508.0 658.6L501.1 654.6ZM469.8 671.2L476.7 675.5L468.6 679.9L461.7 675.5ZM461.7 675.5L468.6 679.9L460.3 684.3L453.5 679.9ZM544.3 654.6L551.5 658.6L544.2 662.7L537.0 658.6ZM498.7 679.9L505.9 684.3L497.9 688.8L490.7 684.3ZM474.3 693.4L481.4 698.1L473.0 702.8L465.8 698.1ZM457.3 702.8L464.4 707.7L455.7 712.6L448.6 707.7ZM586.4 638.9L593.7 642.7L587.0 646.6L579.7 642.7ZM572.8 646.6L580.1 650.6L573.1 654.6L565.8 650.6ZM366.9 772.5L374.0 778.6L363.4 784.8L356.3 778.6ZM601.9 654.6L609.5 658.6L602.7 662.7L595.0 658.6ZM412.1 766.6L419.6 772.5L409.5 778.6L402.1 772.5ZM588.6 671.2L596.4 675.5L589.2 679.9L581.4 675.5ZM485.4 733.1L493.2 738.4L484.3 743.8L476.5 738.4ZM439.3 760.7L447.0 766.6L437.2 772.5L429.6 766.6ZM510.6 727.8L518.5 733.1L509.8 738.4L502.0 733.1ZM535.3 722.6L543.3 727.8L535.0 733.1L526.9 727.8ZM404.1 804.0L411.9 810.7L401.2 817.4L393.3 810.7ZM462.8 778.6L470.9 784.8L461.1 791.0L453.0 784.8ZM648.0 671.2L656.2 675.5L649.5 679.9L641.3 675.5ZM480.5 778.6L488.8 784.8L479.2 791.0L470.9 784.8ZM642.7 684.3L651.1 688.8L644.2 693.4L635.8 688.8ZM525.6 760.7L534.1 766.6L525.1 772.5L516.7 766.6ZM671.2 675.5L679.7 679.9L673.1 684.3L664.6 679.9ZM457.5 817.4L466.1 824.4L455.6 831.4L447.1 824.4ZM616.4 722.6L625.2 727.8L617.6 733.1L608.8 727.8ZM486.4 810.7L495.1 817.4L485.1 824.4L476.3 817.4ZM466.1 824.4L474.8 831.4L464.4 838.6L455.6 831.4ZM473.2 846.0L482.3 853.5L471.6 861.2L462.5 853.5ZM681.4 722.6L690.7 727.8L683.6 733.1L674.3 727.8ZM646.4 760.7L656.0 766.6L648.2 772.5L638.6 766.6ZM521.8 853.5L531.5 861.2L521.2 869.0L511.6 861.2ZM713.9 722.6L723.4 727.8L716.7 733.1L707.1 727.8ZM663.7 760.7L673.4 766.6L665.8 772.5L656.0 766.6ZM695.6 749.4L705.5 755.0L698.2 760.7L688.4 755.0ZM759.0 712.6L768.8 717.6L762.6 722.6L752.7 717.6ZM746.3 722.6L756.2 727.8L749.7 733.1L739.8 727.8ZM660.0 791.0L670.2 797.5L662.1 804.0L651.9 797.5ZM722.6 755.0L732.8 760.7L725.7 766.6L715.5 760.7ZM645.5 817.4L655.9 824.4L647.4 831.4L636.9 824.4ZM619.3 838.6L629.8 846.0L620.7 853.5L610.2 846.0ZM600.9 853.5L611.4 861.2L602.0 869.0L591.4 861.2ZM718.5 772.5L729.0 778.6L721.7 784.8L711.2 778.6ZM696.2 791.0L706.7 797.5L698.9 804.0L688.4 797.5ZM763.5 749.4L773.9 755.0L767.3 760.7L756.8 755.0ZM750.0 760.7L760.6 766.6L753.7 772.5L743.1 766.6ZM691.1 810.7L701.8 817.4L693.9 824.4L683.1 817.4Z"/>
<path fill="#282828" d="M544.7 624.2L551.5 627.8L544.6 631.4L537.8 627.8ZM565.0 620.6L571.9 624.2L565.2 627.8L558.3 624.2ZM537.6 635.2L544.5 638.9L537.4 642.7L530.5 638.9ZM419.1 698.1L425.9 702.8L416.9 707.7L410.2 702.8ZM558.5 638.9L565.6 642.7L558.6 646.6L551.5 642.7ZM432.8 707.7L439.8 712.6L430.8 717.6L423.8 712.6ZM579.2 635.2L586.4 638.9L579.7 642.7L572.5 638.9ZM393.2 738.4L400.2 743.8L390.4 749.4L383.4 743.8ZM373.5 749.4L380.4 755.0L370.2 760.7L363.3 755.0ZM407.4 749.4L414.6 755.0L404.8 760.7L397.5 755.0ZM620.9 635.2L628.4 638.9L621.9 642.7L614.4 638.9ZM588.0 662.7L595.7 666.9L588.6 671.2L581.0 666.9ZM468.9 733.1L476.5 738.4L467.5 743.8L459.9 738.4ZM391.8 778.6L399.3 784.8L388.8 791.0L381.3 784.8ZM511.3 717.6L519.0 722.6L510.6 727.8L502.8 722.6ZM484.3 743.8L492.2 749.4L483.1 755.0L475.2 749.4ZM475.2 749.4L483.1 755.0L473.8 760.7L466.0 755.0ZM447.0 766.6L454.8 772.5L445.0 778.6L437.2 772.5ZM417.2 784.8L424.9 791.0L414.6 797.5L406.8 791.0ZM625.2 666.9L633.2 671.2L626.3 675.5L618.3 671.2ZM589.8 688.8L597.8 693.4L590.4 698.1L582.4 693.4ZM559.4 707.7L567.5 712.6L559.5 717.6L551.5 712.6ZM518.5 733.1L526.5 738.4L517.9 743.8L509.8 738.4ZM454.8 772.5L462.8 778.6L453.0 784.8L445.0 778.6ZM659.5 654.6L667.6 658.6L661.1 662.7L653.1 658.6ZM567.5 712.6L575.6 717.6L567.7 722.6L559.5 717.6ZM543.3 727.8L551.5 733.1L543.2 738.4L535.0 733.1ZM559.7 727.8L568.0 733.1L559.8 738.4L551.5 733.1ZM419.9 817.4L428.1 824.4L417.3 831.4L409.1 824.4ZM675.8 662.7L684.1 666.9L677.7 671.2L669.4 666.9ZM559.8 738.4L568.3 743.8L560.0 749.4L551.5 743.8ZM488.8 784.8L497.3 791.0L487.6 797.5L479.2 791.0ZM601.0 733.1L609.8 738.4L601.9 743.8L593.2 738.4ZM515.3 791.0L524.1 797.5L514.6 804.0L505.9 797.5ZM496.2 804.0L505.0 810.7L495.1 817.4L486.4 810.7ZM617.6 733.1L626.5 738.4L618.7 743.8L609.8 738.4ZM533.4 791.0L542.4 797.5L533.1 804.0L524.1 797.5ZM634.1 733.1L643.1 738.4L635.5 743.8L626.5 738.4ZM560.5 784.8L569.6 791.0L560.6 797.5L551.5 791.0ZM504.0 824.4L513.2 831.4L503.1 838.6L494.0 831.4ZM551.5 804.0L560.8 810.7L551.5 817.4L542.2 810.7ZM460.7 869.0L469.9 877.0L458.7 885.2L449.5 877.0ZM721.4 693.4L730.6 698.1L724.2 702.8L715.0 698.1ZM674.3 727.8L683.6 733.1L676.5 738.4L667.1 733.1ZM683.6 733.1L693.1 738.4L686.0 743.8L676.5 738.4ZM669.2 743.8L678.7 749.4L671.3 755.0L661.7 749.4ZM648.2 772.5L658.0 778.6L650.0 784.8L640.2 778.6ZM561.2 838.6L571.1 846.0L561.4 853.5L551.5 846.0ZM521.2 869.0L531.1 877.0L520.6 885.2L510.7 877.0ZM702.8 743.8L712.6 749.4L705.5 755.0L695.6 749.4ZM599.9 838.6L610.2 846.0L600.9 853.5L590.6 846.0ZM729.5 749.4L739.7 755.0L732.8 760.7L722.6 755.0ZM670.2 797.5L680.5 804.0L672.5 810.7L662.1 804.0ZM725.7 766.6L736.1 772.5L729.0 778.6L718.5 772.5ZM743.1 766.6L753.7 772.5L746.7 778.6L736.1 772.5ZM778.0 766.6L788.9 772.5L782.2 778.6L771.3 772.5Z"/>
<path fill="#2d2d2d" d="M524.5 620.6L531.1 624.2L524.1 627.8L517.6 624.2ZM481.1 642.7L487.7 646.6L480.0 650.6L473.5 646.6ZM551.5 613.7L558.2 617.1L551.5 620.6L544.8 617.1ZM509.9 635.2L516.6 638.9L509.3 642.7L502.6 638.9ZM472.3 654.6L479.0 658.6L471.1 662.7L464.5 658.6ZM516.6 638.9L523.3 642.7L516.0 646.6L509.3 642.7ZM486.7 654.6L493.5 658.6L485.7 662.7L479.0 658.6ZM385.3 707.7L391.9 712.6L382.5 717.6L375.9 712.6ZM410.2 702.8L416.9 707.7L407.8 712.6L401.1 707.7ZM475.5 684.3L482.5 688.8L474.3 693.4L467.2 688.8ZM599.0 624.2L606.2 627.8L599.7 631.4L592.5 627.8ZM387.5 760.7L394.7 766.6L384.5 772.5L377.3 766.6ZM559.2 688.8L566.9 693.4L559.3 698.1L551.5 693.4ZM543.6 707.7L551.5 712.6L543.5 717.6L535.5 712.6ZM633.2 671.2L641.3 675.5L634.4 679.9L626.3 675.5ZM619.4 679.9L627.5 684.3L620.5 688.8L612.3 684.3ZM597.8 693.4L606.0 698.1L598.6 702.8L590.4 698.1ZM661.1 662.7L669.4 666.9L662.8 671.2L654.6 666.9ZM499.2 766.6L507.5 772.5L498.3 778.6L490.0 772.5ZM470.9 784.8L479.2 791.0L469.4 797.5L461.1 791.0ZM628.7 693.4L637.2 698.1L630.0 702.8L621.6 698.1ZM406.3 838.6L414.6 846.0L403.2 853.5L395.0 846.0ZM684.1 666.9L692.5 671.2L686.2 675.5L677.7 671.2ZM600.2 722.6L608.8 727.8L601.0 733.1L592.4 727.8ZM688.3 684.3L697.1 688.8L690.5 693.4L681.7 688.8ZM601.9 743.8L610.8 749.4L602.8 755.0L593.9 749.4ZM495.1 817.4L504.0 824.4L494.0 831.4L485.1 824.4ZM474.8 831.4L483.7 838.6L473.2 846.0L464.4 838.6ZM697.1 688.8L706.0 693.4L699.4 698.1L690.5 693.4ZM670.2 707.7L679.2 712.6L672.2 717.6L663.2 712.6ZM679.2 712.6L688.3 717.6L681.4 722.6L672.2 717.6ZM560.6 797.5L569.9 804.0L560.8 810.7L551.5 804.0ZM701.9 707.7L711.1 712.6L704.4 717.6L695.2 712.6ZM502.1 853.5L511.6 861.2L501.0 869.0L491.6 861.2ZM697.6 722.6L707.1 727.8L700.1 733.1L690.7 727.8ZM690.7 727.8L700.1 733.1L693.1 738.4L683.6 733.1ZM638.6 766.6L648.2 772.5L640.2 778.6L630.6 772.5ZM650.0 784.8L660.0 791.0L651.9 797.5L641.9 791.0ZM626.7 817.4L636.9 824.4L628.2 831.4L617.9 824.4ZM762.6 722.6L772.6 727.8L766.2 733.1L756.2 727.8ZM685.8 784.8L696.2 791.0L688.4 797.5L678.1 791.0ZM778.8 722.6L788.9 727.8L782.7 733.1L772.6 727.8ZM620.7 853.5L631.4 861.2L622.1 869.0L611.4 861.2ZM776.4 738.4L786.8 743.8L780.4 749.4L770.0 743.8ZM736.1 772.5L746.7 778.6L739.6 784.8L729.0 778.6ZM660.2 853.5L671.3 861.2L662.5 869.0L651.4 861.2ZM712.8 824.4L724.0 831.4L716.1 838.6L704.9 831.4Z"/>
<path fill="#323232" d="M551.5 600.3L558.0 603.6L551.5 606.9L545.0 603.6ZM314.1 727.8L320.3 733.1L309.9 738.4L303.8 733.1ZM487.7 646.6L494.3 650.6L486.7 654.6L480.0 650.6ZM414.7 684.3L421.3 688.8L412.5 693.4L405.9 688.8ZM340.4 722.6L346.8 727.8L336.8 733.1L330.4 727.8ZM330.4 727.8L336.8 733.1L326.6 738.4L320.3 733.1ZM333.0 743.8L339.5 749.4L329.1 755.0L322.6 749.4ZM434.7 698.1L441.6 702.8L432.8 707.7L425.9 702.8ZM441.6 702.8L448.6 707.7L439.8 712.6L432.8 707.7ZM514.4 671.2L521.6 675.5L513.8 679.9L506.6 675.5ZM551.5 658.6L558.8 662.7L551.5 666.9L544.2 662.7ZM400.2 743.8L407.4 749.4L397.5 755.0L390.4 749.4ZM345.5 784.8L352.6 791.0L341.6 797.5L334.5 791.0ZM384.5 772.5L391.8 778.6L381.3 784.8L374.0 778.6ZM520.1 702.8L527.8 707.7L519.6 712.6L511.9 707.7ZM602.7 662.7L610.4 666.9L603.5 671.2L595.7 666.9ZM388.8 791.0L396.3 797.5L385.6 804.0L378.1 797.5ZM637.2 650.6L645.1 654.6L638.5 658.6L630.7 654.6ZM610.4 666.9L618.3 671.2L611.3 675.5L603.5 671.2ZM566.9 693.4L574.9 698.1L567.2 702.8L559.3 698.1ZM638.5 658.6L646.5 662.7L639.9 666.9L631.9 662.7ZM483.1 755.0L491.1 760.7L481.8 766.6L473.8 760.7ZM641.3 675.5L649.5 679.9L642.7 684.3L634.4 679.9ZM662.8 671.2L671.2 675.5L664.6 679.9L656.2 675.5ZM649.5 679.9L657.9 684.3L651.1 688.8L642.7 684.3ZM591.7 717.6L600.2 722.6L592.4 727.8L584.0 722.6ZM622.7 707.7L631.3 712.6L623.9 717.6L615.4 712.6ZM625.2 727.8L634.1 733.1L626.5 738.4L617.6 733.1ZM643.1 738.4L652.3 743.8L644.8 749.4L635.5 743.8ZM627.8 749.4L637.0 755.0L629.2 760.7L619.9 755.0ZM611.9 760.7L621.2 766.6L613.0 772.5L603.8 766.6ZM603.8 766.6L613.0 772.5L604.7 778.6L595.5 772.5ZM652.3 743.8L661.7 749.4L654.2 755.0L644.8 749.4ZM704.4 717.6L713.9 722.6L707.1 727.8L697.6 722.6ZM501.0 869.0L510.7 877.0L499.9 885.2L490.3 877.0ZM693.1 738.4L702.8 743.8L695.6 749.4L686.0 743.8ZM671.3 755.0L681.0 760.7L673.4 766.6L663.7 760.7ZM551.5 846.0L561.4 853.5L551.5 861.2L541.6 853.5ZM662.1 804.0L672.5 810.7L664.3 817.4L653.9 810.7ZM672.5 810.7L683.1 817.4L674.9 824.4L664.3 817.4ZM746.7 778.6L757.5 784.8L750.4 791.0L739.6 784.8ZM717.4 804.0L728.3 810.7L720.6 817.4L709.7 810.7ZM815.8 733.1L826.4 738.4L820.4 743.8L809.7 738.4Z"/>
<path fill="#373737" d="M496.8 627.8L503.3 631.4L496.0 635.2L489.5 631.4ZM416.8 675.5L423.3 679.9L414.7 684.3L408.2 679.9ZM558.1 610.3L564.8 613.7L558.2 617.1L551.5 613.7ZM320.3 733.1L326.6 738.4L316.2 743.8L309.9 738.4ZM471.1 662.7L477.8 666.9L469.8 671.2L463.1 666.9ZM446.8 675.5L453.5 679.9L445.1 684.3L438.4 679.9ZM523.3 642.7L530.2 646.6L522.9 650.6L516.0 646.6ZM363.2 727.8L369.8 733.1L359.9 738.4L353.3 733.1ZM349.8 743.8L356.5 749.4L346.2 755.0L339.5 749.4ZM551.5 642.7L558.6 646.6L551.5 650.6L544.4 646.6ZM537.2 650.6L544.3 654.6L537.0 658.6L529.9 654.6ZM366.6 743.8L373.5 749.4L363.3 755.0L356.5 749.4ZM565.6 642.7L572.8 646.6L565.8 650.6L558.6 646.6ZM551.5 650.6L558.7 654.6L551.5 658.6L544.3 654.6ZM421.6 722.6L428.7 727.8L419.4 733.1L412.3 727.8ZM342.4 766.6L349.3 772.5L338.6 778.6L331.7 772.5ZM606.2 627.8L613.5 631.4L607.0 635.2L599.7 631.4ZM599.7 631.4L607.0 635.2L600.4 638.9L593.1 635.2ZM489.7 693.4L497.0 698.1L488.7 702.8L481.4 698.1ZM536.5 675.5L544.0 679.9L536.3 684.3L528.9 679.9ZM587.5 654.6L595.0 658.6L588.0 662.7L580.5 658.6ZM527.8 707.7L535.5 712.6L527.4 717.6L519.6 712.6ZM643.7 646.6L651.5 650.6L645.1 654.6L637.2 650.6ZM624.0 658.6L631.9 662.7L625.2 666.9L617.3 662.7ZM559.5 717.6L567.7 722.6L559.7 727.8L551.5 722.6ZM606.0 698.1L614.3 702.8L606.9 707.7L598.6 702.8ZM669.4 666.9L677.7 671.2L671.2 675.5L662.8 671.2ZM614.3 702.8L622.7 707.7L615.4 712.6L606.9 707.7ZM686.2 675.5L694.8 679.9L688.3 684.3L679.7 679.9ZM551.5 791.0L560.6 797.5L551.5 804.0L542.4 797.5ZM483.7 838.6L492.8 846.0L482.3 853.5L473.2 846.0ZM657.9 727.8L667.1 733.1L659.8 738.4L650.6 733.1ZM542.2 810.7L551.5 817.4L542.0 824.4L532.7 817.4ZM482.3 853.5L491.6 861.2L480.9 869.0L471.6 861.2ZM637.0 755.0L646.4 760.7L638.6 766.6L629.2 760.7ZM656.0 766.6L665.8 772.5L658.0 778.6L648.2 772.5ZM749.4 707.7L759.0 712.6L752.7 717.6L743.1 712.6ZM703.7 784.8L714.2 791.0L706.7 797.5L696.2 791.0ZM655.9 824.4L666.5 831.4L658.0 838.6L647.4 831.4ZM642.3 869.0L653.5 877.0L644.3 885.2L633.1 877.0ZM764.4 778.6L775.4 784.8L768.5 791.0L757.5 784.8ZM720.6 817.4L731.8 824.4L724.0 831.4L712.8 824.4ZM662.5 869.0L673.9 877.0L664.9 885.2L653.5 877.0Z"/>
<path fill="#3c3c3c" d="M538.4 606.9L544.9 610.3L538.2 613.7L531.7 610.3ZM287.2 733.1L293.3 738.4L282.6 743.8L276.6 738.4ZM479.0 658.6L485.7 662.7L477.8 666.9L471.1 662.7ZM356.7 722.6L363.2 727.8L353.3 733.1L346.8 727.8ZM346.8 727.8L353.3 733.1L343.2 738.4L336.8 733.1ZM578.1 613.7L585.0 617.1L578.5 620.6L571.6 617.1ZM516.0 646.6L522.9 650.6L515.5 654.6L508.6 650.6ZM551.5 635.2L558.5 638.9L551.5 642.7L544.5 638.9ZM544.5 638.9L551.5 642.7L544.4 646.6L537.4 642.7ZM537.4 642.7L544.4 646.6L537.2 650.6L530.2 646.6ZM530.2 646.6L537.2 650.6L529.9 654.6L522.9 650.6ZM500.3 662.7L507.3 666.9L499.5 671.2L492.6 666.9ZM578.9 627.8L585.9 631.4L579.2 635.2L572.2 631.4ZM465.8 698.1L473.0 702.8L464.4 707.7L457.3 702.8ZM455.7 712.6L463.0 717.6L454.1 722.6L446.9 717.6ZM380.4 755.0L387.5 760.7L377.3 766.6L370.2 760.7ZM359.9 766.6L366.9 772.5L356.3 778.6L349.3 772.5ZM616.3 654.6L624.0 658.6L617.3 662.7L609.5 658.6ZM467.5 743.8L475.2 749.4L466.0 755.0L458.2 749.4ZM399.3 784.8L406.8 791.0L396.3 797.5L388.8 791.0ZM574.5 688.8L582.4 693.4L574.9 698.1L566.9 693.4ZM406.8 791.0L414.6 797.5L404.1 804.0L396.3 797.5ZM390.2 824.4L398.1 831.4L386.9 838.6L379.0 831.4ZM613.3 693.4L621.6 698.1L614.3 702.8L606.0 698.1ZM517.3 755.0L525.6 760.7L516.7 766.6L508.3 760.7ZM584.0 722.6L592.4 727.8L584.5 733.1L576.1 727.8ZM459.3 804.0L467.8 810.7L457.5 817.4L449.1 810.7ZM428.1 824.4L436.5 831.4L425.6 838.6L417.3 831.4ZM630.0 702.8L638.6 707.7L631.3 712.6L622.7 707.7ZM673.1 684.3L681.7 688.8L675.1 693.4L666.4 688.8ZM423.0 853.5L431.7 861.2L420.3 869.0L411.7 861.2ZM626.5 738.4L635.5 743.8L627.8 749.4L618.7 743.8ZM440.5 869.0L449.5 877.0L438.1 885.2L429.1 877.0ZM686.1 707.7L695.2 712.6L688.3 717.6L679.2 712.6ZM650.6 733.1L659.8 738.4L652.3 743.8L643.1 738.4ZM595.5 772.5L604.7 778.6L596.3 784.8L587.0 778.6ZM523.0 824.4L532.3 831.4L522.5 838.6L513.2 831.4ZM513.2 831.4L522.5 838.6L512.4 846.0L503.1 838.6ZM604.7 778.6L614.2 784.8L605.7 791.0L596.3 784.8ZM661.7 749.4L671.3 755.0L663.7 760.7L654.2 755.0ZM614.2 784.8L623.8 791.0L615.4 797.5L605.7 791.0ZM606.8 804.0L616.6 810.7L607.9 817.4L598.0 810.7ZM570.7 831.4L580.5 838.6L571.1 846.0L561.2 838.6ZM688.4 755.0L698.2 760.7L690.9 766.6L681.0 760.7ZM681.0 760.7L690.9 766.6L683.4 772.5L673.4 766.6ZM561.4 853.5L571.5 861.2L561.6 869.0L551.5 861.2ZM736.4 743.8L746.5 749.4L739.7 755.0L729.5 749.4ZM647.4 831.4L658.0 838.6L649.3 846.0L638.6 838.6ZM640.5 853.5L651.4 861.2L642.3 869.0L631.4 861.2ZM760.6 766.6L771.3 772.5L764.4 778.6L753.7 772.5ZM651.4 861.2L662.5 869.0L653.5 877.0L642.3 869.0ZM728.3 810.7L739.4 817.4L731.8 824.4L720.6 817.4Z"/>
<path fill="#414141" d="M443.5 654.6L449.9 658.6L441.9 662.7L435.4 658.6ZM435.4 658.6L441.9 662.7L433.6 666.9L427.2 662.7ZM393.2 679.9L399.5 684.3L390.6 688.8L384.3 684.3ZM517.6 624.2L524.1 627.8L517.1 631.4L510.5 627.8ZM324.2 722.6L330.4 727.8L320.3 733.1L314.1 727.8ZM431.8 675.5L438.4 679.9L429.9 684.3L423.3 679.9ZM388.0 698.1L394.5 702.8L385.3 707.7L378.8 702.8ZM551.5 627.8L558.4 631.4L551.5 635.2L544.6 631.4ZM530.5 638.9L537.4 642.7L530.2 646.6L523.3 642.7ZM382.5 717.6L389.1 722.6L379.6 727.8L372.9 722.6ZM419.4 733.1L426.5 738.4L417.0 743.8L409.9 738.4ZM445.1 727.8L452.4 733.1L443.2 738.4L435.9 733.1ZM607.8 642.7L615.3 646.6L608.7 650.6L601.1 646.6ZM558.9 671.2L566.5 675.5L559.0 679.9L551.5 675.5ZM629.5 646.6L637.2 650.6L630.7 654.6L623.0 650.6ZM581.4 675.5L589.2 679.9L581.9 684.3L574.1 679.9ZM419.6 772.5L427.3 778.6L417.2 784.8L409.5 778.6ZM378.1 797.5L385.6 804.0L374.7 810.7L367.2 804.0ZM427.3 778.6L435.1 784.8L424.9 791.0L417.2 784.8ZM604.3 679.9L612.3 684.3L605.1 688.8L597.1 684.3ZM464.4 766.6L472.4 772.5L462.8 778.6L454.8 772.5ZM422.5 804.0L430.5 810.7L419.9 817.4L411.9 810.7ZM551.5 733.1L559.8 738.4L551.5 743.8L543.2 738.4ZM542.9 760.7L551.5 766.6L542.7 772.5L534.1 766.6ZM665.1 722.6L674.3 727.8L667.1 733.1L657.9 727.8ZM471.6 861.2L480.9 869.0L469.9 877.0L460.7 869.0ZM667.1 733.1L676.5 738.4L669.2 743.8L659.8 738.4ZM629.2 760.7L638.6 766.6L630.6 772.5L621.2 766.6ZM551.5 817.4L561.0 824.4L551.5 831.4L542.0 824.4ZM711.1 712.6L720.5 717.6L713.9 722.6L704.4 717.6ZM739.9 702.8L749.4 707.7L743.1 712.6L733.6 707.7ZM615.4 797.5L625.2 804.0L616.6 810.7L606.8 804.0ZM598.0 810.7L607.9 817.4L599.0 824.4L589.1 817.4ZM658.0 778.6L667.9 784.8L660.0 791.0L650.0 784.8ZM616.6 810.7L626.7 817.4L617.9 824.4L607.9 817.4ZM571.5 861.2L581.8 869.0L571.9 877.0L561.6 869.0ZM581.8 869.0L592.3 877.0L582.4 885.2L571.9 877.0ZM739.7 755.0L750.0 760.7L743.1 766.6L732.8 760.7ZM711.2 778.6L721.7 784.8L714.2 791.0L703.7 784.8ZM664.3 817.4L674.9 824.4L666.5 831.4L655.9 824.4ZM674.9 824.4L685.7 831.4L677.4 838.6L666.5 831.4ZM786.8 743.8L797.4 749.4L791.0 755.0L780.4 749.4ZM757.5 784.8L768.5 791.0L761.4 797.5L750.4 791.0ZM704.9 831.4L716.1 838.6L708.0 846.0L696.7 838.6Z"/>
<path fill="#464646" d="M303.8 733.1L309.9 738.4L299.4 743.8L293.3 738.4ZM564.6 606.9L571.3 610.3L564.8 613.7L558.1 610.3ZM480.0 650.6L486.7 654.6L479.0 658.6L472.3 654.6ZM564.8 613.7L571.6 617.1L565.0 620.6L558.2 617.1ZM494.3 650.6L501.1 654.6L493.5 658.6L486.7 654.6ZM455.0 671.2L461.7 675.5L453.5 679.9L446.8 675.5ZM305.6 749.4L312.0 755.0L301.2 760.7L294.9 755.0ZM565.2 627.8L572.2 631.4L565.4 635.2L558.4 631.4ZM460.3 684.3L467.2 688.8L458.8 693.4L451.9 688.8ZM499.5 671.2L506.6 675.5L498.7 679.9L491.7 675.5ZM331.7 772.5L338.6 778.6L327.6 784.8L320.8 778.6ZM370.2 760.7L377.3 766.6L366.9 772.5L359.9 766.6ZM580.1 650.6L587.5 654.6L580.5 658.6L573.1 654.6ZM580.5 658.6L588.0 662.7L581.0 666.9L573.4 662.7ZM496.1 707.7L503.6 712.6L495.2 717.6L487.6 712.6ZM559.0 679.9L566.7 684.3L559.2 688.8L551.5 684.3ZM528.1 698.1L535.8 702.8L527.8 707.7L520.1 702.8ZM459.9 738.4L467.5 743.8L458.2 749.4L450.7 743.8ZM359.8 797.5L367.2 804.0L356.1 810.7L348.8 804.0ZM609.5 658.6L617.3 662.7L610.4 666.9L602.7 662.7ZM494.2 727.8L502.0 733.1L493.2 738.4L485.4 733.1ZM596.4 675.5L604.3 679.9L597.1 684.3L589.2 679.9ZM589.2 679.9L597.1 684.3L589.8 688.8L581.9 684.3ZM501.1 743.8L509.1 749.4L500.2 755.0L492.2 749.4ZM590.4 698.1L598.6 702.8L591.1 707.7L582.9 702.8ZM453.0 784.8L461.1 791.0L451.1 797.5L443.0 791.0ZM451.1 797.5L459.3 804.0L449.1 810.7L440.9 804.0ZM409.1 824.4L417.3 831.4L406.3 838.6L398.1 831.4ZM666.4 688.8L675.1 693.4L668.3 698.1L659.6 693.4ZM585.1 743.8L593.9 749.4L585.7 755.0L576.9 749.4ZM445.0 838.6L453.7 846.0L442.8 853.5L434.1 846.0ZM464.4 838.6L473.2 846.0L462.5 853.5L453.7 846.0ZM453.7 846.0L462.5 853.5L451.6 861.2L442.8 853.5ZM442.8 853.5L451.6 861.2L440.5 869.0L431.7 861.2ZM663.2 712.6L672.2 717.6L665.1 722.6L656.1 717.6ZM641.6 727.8L650.6 733.1L643.1 738.4L634.1 733.1ZM692.8 702.8L701.9 707.7L695.2 712.6L686.1 707.7ZM542.0 824.4L551.5 831.4L541.8 838.6L532.3 831.4ZM511.6 861.2L521.2 869.0L510.7 877.0L501.0 869.0ZM746.2 698.1L755.6 702.8L749.4 707.7L739.9 702.8ZM665.8 772.5L675.7 778.6L667.9 784.8L658.0 778.6ZM541.4 869.0L551.5 877.0L541.2 885.2L531.1 877.0ZM765.2 707.7L775.0 712.6L768.8 717.6L759.0 712.6ZM705.5 755.0L715.5 760.7L708.3 766.6L698.2 760.7ZM678.1 791.0L688.4 797.5L680.5 804.0L670.2 797.5ZM756.8 755.0L767.3 760.7L760.6 766.6L750.0 760.7ZM753.7 772.5L764.4 778.6L757.5 784.8L746.7 778.6ZM677.4 838.6L688.4 846.0L680.0 853.5L668.9 846.0ZM809.7 738.4L820.4 743.8L814.3 749.4L803.6 743.8Z"/>
<path fill="#4b4b4b" d="M344.0 712.6L350.3 717.6L340.4 722.6L334.2 717.6ZM495.2 642.7L501.9 646.6L494.3 650.6L487.7 646.6ZM397.0 693.4L403.6 698.1L394.5 702.8L388.0 698.1ZM299.4 743.8L305.6 749.4L294.9 755.0L288.7 749.4ZM537.8 627.8L544.6 631.4L537.6 635.2L530.8 631.4ZM412.5 693.4L419.1 698.1L410.2 702.8L403.6 698.1ZM336.8 733.1L343.2 738.4L333.0 743.8L326.6 738.4ZM445.1 684.3L451.9 688.8L443.4 693.4L436.6 688.8ZM515.5 654.6L522.5 658.6L515.0 662.7L508.0 658.6ZM529.9 654.6L537.0 658.6L529.6 662.7L522.5 658.6ZM507.3 666.9L514.4 671.2L506.6 675.5L499.5 671.2ZM491.7 675.5L498.7 679.9L490.7 684.3L483.6 679.9ZM483.6 679.9L490.7 684.3L482.5 688.8L475.5 684.3ZM423.8 712.6L430.8 717.6L421.6 722.6L414.7 717.6ZM430.8 717.6L437.9 722.6L428.7 727.8L421.6 722.6ZM383.4 743.8L390.4 749.4L380.4 755.0L373.5 749.4ZM565.8 650.6L573.1 654.6L566.0 658.6L558.7 654.6ZM536.8 666.9L544.1 671.2L536.5 675.5L529.2 671.2ZM505.9 684.3L513.2 688.8L505.2 693.4L497.9 688.8ZM437.9 722.6L445.1 727.8L435.9 733.1L428.7 727.8ZM544.1 671.2L551.5 675.5L544.0 679.9L536.5 675.5ZM433.8 743.8L441.3 749.4L431.7 755.0L424.3 749.4ZM628.4 638.9L636.0 642.7L629.5 646.6L621.9 642.7ZM431.7 755.0L439.3 760.7L429.6 766.6L422.0 760.7ZM458.2 749.4L466.0 755.0L456.6 760.7L448.8 755.0ZM645.1 654.6L653.1 658.6L646.5 662.7L638.5 658.6ZM472.4 772.5L480.5 778.6L470.9 784.8L462.8 778.6ZM411.9 810.7L419.9 817.4L409.1 824.4L401.2 817.4ZM568.0 733.1L576.5 738.4L568.3 743.8L559.8 738.4ZM615.4 712.6L623.9 717.6L616.4 722.6L607.8 717.6ZM608.8 727.8L617.6 733.1L609.8 738.4L601.0 733.1ZM524.6 784.8L533.4 791.0L524.1 797.5L515.3 791.0ZM434.1 846.0L442.8 853.5L431.7 861.2L423.0 853.5ZM694.8 679.9L703.5 684.3L697.1 688.8L688.3 684.3ZM560.3 772.5L569.2 778.6L560.5 784.8L551.5 778.6ZM542.5 784.8L551.5 791.0L542.4 797.5L533.4 791.0ZM505.0 810.7L513.9 817.4L504.0 824.4L495.1 817.4ZM683.9 698.1L692.8 702.8L686.1 707.7L677.1 702.8ZM462.5 853.5L471.6 861.2L460.7 869.0L451.6 861.2ZM451.6 861.2L460.7 869.0L449.5 877.0L440.5 869.0ZM699.4 698.1L708.5 702.8L701.9 707.7L692.8 702.8ZM491.6 861.2L501.0 869.0L490.3 877.0L480.9 869.0ZM717.7 707.7L727.1 712.6L720.5 717.6L711.1 712.6ZM630.6 772.5L640.2 778.6L632.1 784.8L622.5 778.6ZM541.8 838.6L551.5 846.0L541.6 853.5L531.9 846.0ZM531.5 861.2L541.4 869.0L531.1 877.0L521.2 869.0ZM607.9 817.4L617.9 824.4L609.0 831.4L599.0 824.4ZM589.8 831.4L599.9 838.6L590.6 846.0L580.5 838.6ZM636.9 824.4L647.4 831.4L638.6 838.6L628.2 831.4ZM753.2 743.8L763.5 749.4L756.8 755.0L746.5 749.4ZM688.4 797.5L698.9 804.0L691.1 810.7L680.5 804.0ZM788.9 727.8L799.2 733.1L793.1 738.4L782.7 733.1ZM714.2 791.0L724.9 797.5L717.4 804.0L706.7 797.5ZM683.1 817.4L693.9 824.4L685.7 831.4L674.9 824.4ZM680.0 853.5L691.3 861.2L682.7 869.0L671.3 861.2Z"/>
<path fill="#505050" d="M474.6 638.9L481.1 642.7L473.5 646.6L467.0 642.7ZM502.6 638.9L509.3 642.7L501.9 646.6L495.2 642.7ZM440.2 671.2L446.8 675.5L438.4 679.9L431.8 675.5ZM312.0 755.0L318.4 760.7L307.6 766.6L301.2 760.7ZM405.4 722.6L412.3 727.8L402.9 733.1L395.9 727.8ZM376.6 738.4L383.4 743.8L373.5 749.4L366.6 743.8ZM325.0 766.6L331.7 772.5L320.8 778.6L314.1 772.5ZM572.5 638.9L579.7 642.7L572.8 646.6L565.6 642.7ZM522.0 666.9L529.2 671.2L521.6 675.5L514.4 671.2ZM439.8 712.6L446.9 717.6L437.9 722.6L430.8 717.6ZM463.0 717.6L470.3 722.6L461.4 727.8L454.1 722.6ZM377.3 766.6L384.5 772.5L374.0 778.6L366.9 772.5ZM566.2 666.9L573.8 671.2L566.5 675.5L558.9 671.2ZM551.5 675.5L559.0 679.9L551.5 684.3L544.0 679.9ZM520.6 693.4L528.1 698.1L520.1 702.8L512.6 698.1ZM512.6 698.1L520.1 702.8L511.9 707.7L504.4 702.8ZM374.0 778.6L381.3 784.8L370.7 791.0L363.4 784.8ZM363.4 784.8L370.7 791.0L359.8 797.5L352.6 791.0ZM566.5 675.5L574.1 679.9L566.7 684.3L559.0 679.9ZM503.6 712.6L511.3 717.6L502.8 722.6L495.2 717.6ZM486.6 722.6L494.2 727.8L485.4 733.1L477.8 727.8ZM450.7 743.8L458.2 749.4L448.8 755.0L441.3 749.4ZM422.0 760.7L429.6 766.6L419.6 772.5L412.1 766.6ZM402.1 772.5L409.5 778.6L399.3 784.8L391.8 778.6ZM409.5 778.6L417.2 784.8L406.8 791.0L399.3 784.8ZM559.3 698.1L567.2 702.8L559.4 707.7L551.5 702.8ZM535.5 712.6L543.5 717.6L535.3 722.6L527.4 717.6ZM374.7 810.7L382.4 817.4L371.2 824.4L363.6 817.4ZM414.6 797.5L422.5 804.0L411.9 810.7L404.1 804.0ZM612.3 684.3L620.5 688.8L613.3 693.4L605.1 688.8ZM582.9 702.8L591.1 707.7L583.4 712.6L575.2 707.7ZM509.1 749.4L517.3 755.0L508.3 760.7L500.2 755.0ZM481.8 766.6L490.0 772.5L480.5 778.6L472.4 772.5ZM667.6 658.6L675.8 662.7L669.4 666.9L661.1 662.7ZM508.3 760.7L516.7 766.6L507.5 772.5L499.2 766.6ZM551.5 743.8L560.0 749.4L551.5 755.0L543.0 749.4ZM516.7 766.6L525.1 772.5L516.0 778.6L507.5 772.5ZM651.1 688.8L659.6 693.4L652.7 698.1L644.2 693.4ZM560.0 749.4L568.6 755.0L560.1 760.7L551.5 755.0ZM534.1 766.6L542.7 772.5L533.8 778.6L525.1 772.5ZM516.0 778.6L524.6 784.8L515.3 791.0L506.7 784.8ZM506.7 784.8L515.3 791.0L505.9 797.5L497.3 791.0ZM568.6 755.0L577.4 760.7L568.9 766.6L560.1 760.7ZM542.7 772.5L551.5 778.6L542.5 784.8L533.8 778.6ZM485.1 824.4L494.0 831.4L483.7 838.6L474.8 831.4ZM648.9 722.6L657.9 727.8L650.6 733.1L641.6 727.8ZM569.2 778.6L578.4 784.8L569.6 791.0L560.5 784.8ZM513.9 817.4L523.0 824.4L513.2 831.4L504.0 824.4ZM659.8 738.4L669.2 743.8L661.7 749.4L652.3 743.8ZM551.5 831.4L561.2 838.6L551.5 846.0L541.8 838.6ZM589.1 817.4L599.0 824.4L589.8 831.4L580.0 824.4ZM736.6 717.6L746.3 722.6L739.8 727.8L730.1 722.6ZM730.1 722.6L739.8 727.8L733.2 733.1L723.4 727.8ZM551.5 861.2L561.6 869.0L551.5 877.0L541.4 869.0ZM726.4 738.4L736.4 743.8L729.5 749.4L719.6 743.8ZM590.6 846.0L600.9 853.5L591.4 861.2L581.2 853.5ZM756.2 727.8L766.2 733.1L759.8 738.4L749.7 733.1ZM628.2 831.4L638.6 838.6L629.8 846.0L619.3 838.6ZM611.4 861.2L622.1 869.0L612.7 877.0L602.0 869.0ZM685.7 831.4L696.7 838.6L688.4 846.0L677.4 838.6Z"/>
<path fill="#555555" d="M511.1 620.6L517.6 624.2L510.5 627.8L504.0 624.2ZM401.9 675.5L408.2 679.9L399.5 684.3L393.2 679.9ZM538.2 613.7L544.8 617.1L538.0 620.6L531.4 617.1ZM503.3 631.4L509.9 635.2L502.6 638.9L496.0 635.2ZM473.5 646.6L480.0 650.6L472.3 654.6L465.8 650.6ZM399.5 684.3L405.9 688.8L397.0 693.4L390.6 688.8ZM334.2 717.6L340.4 722.6L330.4 727.8L324.2 722.6ZM359.9 712.6L366.4 717.6L356.7 722.6L350.3 717.6ZM571.6 617.1L578.5 620.6L571.9 624.2L565.0 620.6ZM544.6 631.4L551.5 635.2L544.5 638.9L537.6 635.2ZM372.9 722.6L379.6 727.8L369.8 733.1L363.2 727.8ZM558.4 631.4L565.4 635.2L558.5 638.9L551.5 635.2ZM369.8 733.1L376.6 738.4L366.6 743.8L359.9 738.4ZM346.2 755.0L353.0 760.7L342.4 766.6L335.7 760.7ZM537.0 658.6L544.2 662.7L536.8 666.9L529.6 662.7ZM529.6 662.7L536.8 666.9L529.2 671.2L522.0 666.9ZM521.1 684.3L528.5 688.8L520.6 693.4L513.2 688.8ZM513.2 688.8L520.6 693.4L512.6 698.1L505.2 693.4ZM614.4 638.9L621.9 642.7L615.3 646.6L607.8 642.7ZM536.3 684.3L543.8 688.8L536.1 693.4L528.5 688.8ZM404.8 760.7L412.1 766.6L402.1 772.5L394.7 766.6ZM352.6 791.0L359.8 797.5L348.8 804.0L341.6 797.5ZM615.3 646.6L623.0 650.6L616.3 654.6L608.7 650.6ZM551.5 684.3L559.2 688.8L551.5 693.4L543.8 688.8ZM441.3 749.4L448.8 755.0L439.3 760.7L431.7 755.0ZM381.3 784.8L388.8 791.0L378.1 797.5L370.7 791.0ZM603.5 671.2L611.3 675.5L604.3 679.9L596.4 675.5ZM385.6 804.0L393.3 810.7L382.4 817.4L374.7 810.7ZM473.8 760.7L481.8 766.6L472.4 772.5L464.4 766.6ZM500.2 755.0L508.3 760.7L499.2 766.6L491.1 760.7ZM401.2 817.4L409.1 824.4L398.1 831.4L390.2 824.4ZM656.2 675.5L664.6 679.9L657.9 684.3L649.5 679.9ZM659.6 693.4L668.3 698.1L661.4 702.8L652.7 698.1ZM623.9 717.6L632.7 722.6L625.2 727.8L616.4 722.6ZM560.1 760.7L568.9 766.6L560.3 772.5L551.5 766.6ZM709.8 679.9L718.7 684.3L712.4 688.8L703.5 684.3ZM596.3 784.8L605.7 791.0L597.1 797.5L587.7 791.0ZM587.7 791.0L597.1 797.5L588.4 804.0L578.9 797.5ZM736.9 693.4L746.2 698.1L739.9 702.8L730.6 698.1ZM622.5 778.6L632.1 784.8L623.8 791.0L614.2 784.8ZM531.9 846.0L541.6 853.5L531.5 861.2L521.8 853.5ZM727.1 712.6L736.6 717.6L730.1 722.6L720.5 717.6ZM686.0 743.8L695.6 749.4L688.4 755.0L678.7 749.4ZM690.9 766.6L700.9 772.5L693.5 778.6L683.4 772.5ZM693.5 778.6L703.7 784.8L696.2 791.0L685.8 784.8ZM610.2 846.0L620.7 853.5L611.4 861.2L600.9 853.5ZM743.2 797.5L754.2 804.0L746.9 810.7L735.8 804.0Z"/>
<path fill="#5a5a5a" d="M489.5 631.4L496.0 635.2L488.6 638.9L482.1 635.2ZM375.3 688.8L381.6 693.4L372.4 698.1L366.1 693.4ZM328.0 712.6L334.2 717.6L324.2 722.6L318.1 717.6ZM308.0 722.6L314.1 727.8L303.8 733.1L297.7 727.8ZM297.7 727.8L303.8 733.1L293.3 738.4L287.2 733.1ZM488.6 638.9L495.2 642.7L487.7 646.6L481.1 642.7ZM449.9 658.6L456.5 662.7L448.4 666.9L441.9 662.7ZM441.9 662.7L448.4 666.9L440.2 671.2L433.6 666.9ZM381.6 693.4L388.0 698.1L378.8 702.8L372.4 698.1ZM293.3 738.4L299.4 743.8L288.7 749.4L282.6 743.8ZM517.1 631.4L523.8 635.2L516.6 638.9L509.9 635.2ZM350.3 717.6L356.7 722.6L346.8 727.8L340.4 722.6ZM571.3 610.3L578.1 613.7L571.6 617.1L564.8 613.7ZM501.9 646.6L508.6 650.6L501.1 654.6L494.3 650.6ZM436.6 688.8L443.4 693.4L434.7 698.1L427.9 693.4ZM343.2 738.4L349.8 743.8L339.5 749.4L333.0 743.8ZM389.1 722.6L395.9 727.8L386.3 733.1L379.6 727.8ZM587.0 646.6L594.4 650.6L587.5 654.6L580.1 650.6ZM356.3 778.6L363.4 784.8L352.6 791.0L345.5 784.8ZM573.4 662.7L581.0 666.9L573.8 671.2L566.2 666.9ZM651.5 650.6L659.5 654.6L653.1 658.6L645.1 654.6ZM449.1 810.7L457.5 817.4L447.1 824.4L438.7 817.4ZM657.9 684.3L666.4 688.8L659.6 693.4L651.1 688.8ZM497.3 791.0L505.9 797.5L496.2 804.0L487.6 797.5ZM477.8 804.0L486.4 810.7L476.3 817.4L467.8 810.7ZM585.7 755.0L594.7 760.7L586.3 766.6L577.4 760.7ZM594.7 760.7L603.8 766.6L595.5 772.5L586.3 766.6ZM503.1 838.6L512.4 846.0L502.1 853.5L492.8 846.0ZM640.2 778.6L650.0 784.8L641.9 791.0L632.1 784.8ZM755.6 702.8L765.2 707.7L759.0 712.6L749.4 707.7ZM599.0 824.4L609.0 831.4L599.9 838.6L589.8 831.4ZM651.9 797.5L662.1 804.0L653.9 810.7L643.7 804.0ZM749.7 733.1L759.8 738.4L753.2 743.8L743.1 738.4Z"/>
<path fill="#5f5f5f" d="M363.1 702.8L369.4 707.7L359.9 712.6L353.6 707.7ZM464.5 658.6L471.1 662.7L463.1 666.9L456.5 662.7ZM309.9 738.4L316.2 743.8L305.6 749.4L299.4 743.8ZM429.9 684.3L436.6 688.8L427.9 693.4L421.3 688.8ZM353.3 733.1L359.9 738.4L349.8 743.8L343.2 738.4ZM585.0 617.1L591.9 620.6L585.4 624.2L578.5 620.6ZM425.9 702.8L432.8 707.7L423.8 712.6L416.9 707.7ZM339.5 749.4L346.2 755.0L335.7 760.7L329.1 755.0ZM585.4 624.2L592.5 627.8L585.9 631.4L578.9 627.8ZM544.4 646.6L551.5 650.6L544.3 654.6L537.2 650.6ZM490.7 684.3L497.9 688.8L489.7 693.4L482.5 688.8ZM353.0 760.7L359.9 766.6L349.3 772.5L342.4 766.6ZM529.2 671.2L536.5 675.5L528.9 679.9L521.6 675.5ZM521.6 675.5L528.9 679.9L521.1 684.3L513.8 679.9ZM558.8 662.7L566.2 666.9L558.9 671.2L551.5 666.9ZM551.5 666.9L558.9 671.2L551.5 675.5L544.1 671.2ZM479.1 717.6L486.6 722.6L477.8 727.8L470.3 722.6ZM424.3 749.4L431.7 755.0L422.0 760.7L414.6 755.0ZM511.9 707.7L519.6 712.6L511.3 717.6L503.6 712.6ZM495.2 717.6L502.8 722.6L494.2 727.8L486.6 722.6ZM551.5 702.8L559.4 707.7L551.5 712.6L543.6 707.7ZM543.5 717.6L551.5 722.6L543.3 727.8L535.3 722.6ZM445.0 778.6L453.0 784.8L443.0 791.0L435.1 784.8ZM490.0 772.5L498.3 778.6L488.8 784.8L480.5 778.6ZM637.2 698.1L645.7 702.8L638.6 707.7L630.0 702.8ZM592.4 727.8L601.0 733.1L593.2 738.4L584.5 733.1ZM675.1 693.4L683.9 698.1L677.1 702.8L668.3 698.1ZM640.0 717.6L648.9 722.6L641.6 727.8L632.7 722.6ZM593.9 749.4L602.8 755.0L594.7 760.7L585.7 755.0ZM533.1 804.0L542.2 810.7L532.7 817.4L523.6 810.7ZM532.3 831.4L541.8 838.6L531.9 846.0L522.5 838.6ZM715.5 760.7L725.7 766.6L718.5 772.5L708.3 766.6ZM721.7 784.8L732.3 791.0L724.9 797.5L714.2 791.0ZM706.7 797.5L717.4 804.0L709.7 810.7L698.9 804.0ZM658.0 838.6L668.9 846.0L660.2 853.5L649.3 846.0ZM799.2 733.1L809.7 738.4L803.6 743.8L793.1 738.4Z"/>
<path fill="#646464" d="M531.7 610.3L538.2 613.7L531.4 617.1L524.9 613.7ZM347.4 702.8L353.6 707.7L344.0 712.6L337.8 707.7ZM337.8 707.7L344.0 712.6L334.2 717.6L328.0 712.6ZM433.6 666.9L440.2 671.2L431.8 675.5L425.3 671.2ZM509.3 642.7L516.0 646.6L508.6 650.6L501.9 646.6ZM578.5 620.6L585.4 624.2L578.9 627.8L571.9 624.2ZM508.0 658.6L515.0 662.7L507.3 666.9L500.3 662.7ZM565.4 635.2L572.5 638.9L565.6 642.7L558.5 638.9ZM592.5 627.8L599.7 631.4L593.1 635.2L585.9 631.4ZM506.6 675.5L513.8 679.9L505.9 684.3L498.7 679.9ZM497.9 688.8L505.2 693.4L497.0 698.1L489.7 693.4ZM481.4 698.1L488.7 702.8L480.3 707.7L473.0 702.8ZM409.9 738.4L417.0 743.8L407.4 749.4L400.2 743.8ZM573.1 654.6L580.5 658.6L573.4 662.7L566.0 658.6ZM480.3 707.7L487.6 712.6L479.1 717.6L471.7 712.6ZM535.8 702.8L543.6 707.7L535.5 712.6L527.8 707.7ZM574.9 698.1L582.9 702.8L575.2 707.7L567.2 702.8ZM626.3 675.5L634.4 679.9L627.5 684.3L619.4 679.9ZM432.8 797.5L440.9 804.0L430.5 810.7L422.5 804.0ZM627.5 684.3L635.8 688.8L628.7 693.4L620.5 688.8ZM567.7 722.6L576.1 727.8L568.0 733.1L559.7 727.8ZM543.0 749.4L551.5 755.0L542.9 760.7L534.4 755.0ZM677.7 671.2L686.2 675.5L679.7 679.9L671.2 675.5ZM584.5 733.1L593.2 738.4L585.1 743.8L576.5 738.4ZM551.5 755.0L560.1 760.7L551.5 766.6L542.9 760.7ZM467.8 810.7L476.3 817.4L466.1 824.4L457.5 817.4ZM692.5 671.2L701.1 675.5L694.8 679.9L686.2 675.5ZM645.7 702.8L654.4 707.7L647.3 712.6L638.6 707.7ZM631.3 712.6L640.0 717.6L632.7 722.6L623.9 717.6ZM455.6 831.4L464.4 838.6L453.7 846.0L445.0 838.6ZM668.3 698.1L677.1 702.8L670.2 707.7L661.4 702.8ZM661.4 702.8L670.2 707.7L663.2 712.6L654.4 707.7ZM609.8 738.4L618.7 743.8L610.8 749.4L601.9 743.8ZM523.6 810.7L532.7 817.4L523.0 824.4L513.9 817.4ZM695.2 712.6L704.4 717.6L697.6 722.6L688.3 717.6ZM613.0 772.5L622.5 778.6L614.2 784.8L604.7 778.6ZM512.4 846.0L521.8 853.5L511.6 861.2L502.1 853.5ZM676.5 738.4L686.0 743.8L678.7 749.4L669.2 743.8ZM654.2 755.0L663.7 760.7L656.0 766.6L646.4 760.7ZM588.4 804.0L598.0 810.7L589.1 817.4L579.4 810.7ZM723.4 727.8L733.2 733.1L726.4 738.4L716.7 733.1ZM673.4 766.6L683.4 772.5L675.7 778.6L665.8 772.5ZM712.6 749.4L722.6 755.0L715.5 760.7L705.5 755.0ZM635.2 810.7L645.5 817.4L636.9 824.4L626.7 817.4ZM609.0 831.4L619.3 838.6L610.2 846.0L599.9 838.6ZM581.2 853.5L591.4 861.2L581.8 869.0L571.5 861.2ZM653.9 810.7L664.3 817.4L655.9 824.4L645.5 817.4ZM784.9 717.6L795.0 722.6L788.9 727.8L778.8 722.6ZM746.5 749.4L756.8 755.0L750.0 760.7L739.7 755.0ZM693.9 824.4L704.9 831.4L696.7 838.6L685.7 831.4Z"/>
</g>
<line x1="551.5" y1="444.6" x2="218.0" y2="557.5" stroke="#9c9c9c" stroke-width="1" />
<line x1="551.5" y1="444.6" x2="885.0" y2="557.5" stroke="#9c9c9c" stroke-width="1" />
<line x1="218.0" y1="557.5" x2="551.5" y2="792.0" stroke="#8c8c8c" stroke-width="0.9" />
<line x1="885.0" y1="557.5" x2="551.5" y2="792.0" stroke="#8c8c8c" stroke-width="0.9" />
<line x1="218.0" y1="557.5" x2="320.0" y2="874.0" stroke="#9c9c9c" stroke-width="1" />
<line x1="885.0" y1="557.5" x2="783.0" y2="874.0" stroke="#9c9c9c" stroke-width="1" />
<line x1="551.5" y1="792.0" x2="551.5" y2="874.0" stroke="#9c9c9c" stroke-width="1" />
<line x1="256.3" y1="861.0" x2="349.8" y2="806.3" stroke="#9c9c9c" stroke-width="0.9" />
<line x1="846.7" y1="861.0" x2="753.2" y2="806.3" stroke="#9c9c9c" stroke-width="0.9" />
<line x1="256.3" y1="861.0" x2="266.5" y2="873.0" stroke="#9c9c9c" stroke-width="0.9" />
<line x1="846.7" y1="861.0" x2="836.5" y2="873.0" stroke="#9c9c9c" stroke-width="0.9" />
<line x1="294.7" y1="839.0" x2="326.0" y2="873.0" stroke="#9c9c9c" stroke-width="0.9" />
<line x1="808.3" y1="839.0" x2="777.0" y2="873.0" stroke="#9c9c9c" stroke-width="0.9" />
<line x1="329.0" y1="818.6" x2="386.5" y2="873.0" stroke="#9c9c9c" stroke-width="0.9" />
<line x1="774.0" y1="818.6" x2="716.5" y2="873.0" stroke="#9c9c9c" stroke-width="0.9" />
<line x1="298.0" y1="873.0" x2="373.9" y2="827.6" stroke="#9c9c9c" stroke-width="0.9" />
<line x1="805.0" y1="873.0" x2="729.1" y2="827.6" stroke="#9c9c9c" stroke-width="0.9" />
<line x1="302.5" y1="873.0" x2="374.8" y2="830.0" stroke="#9c9c9c" stroke-width="0.9" />
<line x1="800.5" y1="873.0" x2="728.2" y2="830.0" stroke="#9c9c9c" stroke-width="0.9" />
<line x1="359.2" y1="872.0" x2="395.2" y2="847.2" stroke="#9c9c9c" stroke-width="0.9" />
<line x1="743.8" y1="872.0" x2="707.8" y2="847.2" stroke="#9c9c9c" stroke-width="0.9" />
<line x1="318.4" y1="864.3" x2="327.0" y2="873.0" stroke="#9c9c9c" stroke-width="0.9" />
<line x1="784.6" y1="864.3" x2="776.0" y2="873.0" stroke="#9c9c9c" stroke-width="0.9" />
<defs><linearGradient id="gb" gradientUnits="userSpaceOnUse" x1="0" y1="737" x2="0" y2="420"><stop offset="0" stop-color="#0c18d8"/><stop offset=".45" stop-color="#2348e0"/><stop offset="1" stop-color="#3a8cf0"/></linearGradient><linearGradient id="gg" gradientUnits="userSpaceOnUse" x1="551.5" y1="737" x2="721.8" y2="628.4"><stop offset="0" stop-color="#10e030"/><stop offset="1" stop-color="#a8f060"/></linearGradient><linearGradient id="gr" gradientUnits="userSpaceOnUse" x1="551.5" y1="737" x2="790" y2="896"><stop offset="0" stop-color="#e01414"/><stop offset=".55" stop-color="#f04020"/><stop offset="1" stop-color="#ff9030"/></linearGradient></defs>
<line x1="551.5" y1="438.0" x2="551.5" y2="600.0" stroke="url(#gb)" stroke-width="1.1" />
<line x1="551.5" y1="600.0" x2="551.5" y2="737.0" stroke="url(#gb)" stroke-width="1.5" />
<line x1="551.5" y1="716.0" x2="551.5" y2="737.0" stroke="#1018b8" stroke-width="2.4" />
<line x1="551.5" y1="737.0" x2="672.0" y2="660.0" stroke="url(#gg)" stroke-width="1.2" stroke-dasharray="1.2 1.8"/>
<line x1="672.0" y1="660.0" x2="721.8" y2="628.4" stroke="url(#gg)" stroke-width="1.1" />
<line x1="551.5" y1="737.0" x2="713.5" y2="842.3" stroke="url(#gr)" stroke-width="1" stroke-dasharray="1 1.8"/>
<line x1="713.5" y1="842.3" x2="759.0" y2="873.0" stroke="url(#gr)" stroke-width="1" />
<line x1="358.0" y1="733.5" x2="637.0" y2="666.0" stroke="#c41a26" stroke-width="1" stroke-dasharray="2.6 2.2"/>
<line x1="637.0" y1="666.0" x2="557.0" y2="780.0" stroke="#b01018" stroke-width="0.9" />
<line x1="512.0" y1="847.0" x2="493.0" y2="873.0" stroke="#b01018" stroke-width="0.9" />
<line x1="325.3" y1="749.6" x2="356.8" y2="736.3" stroke="#ffb060" stroke-width="1.1" stroke-dasharray="1 1.2"/>
<line x1="322.5" y1="751.0" x2="531.0" y2="810.0" stroke="#eaea50" stroke-width="1.2" stroke-dasharray="2 1.5 1 1.5"/>
<path d="M536 810Q603 803.5 679 788.5" fill="none" stroke="#fff" stroke-width="1.15" stroke-dasharray="3.4 3.3"/>
<line x1="417.0" y1="732.0" x2="530.0" y2="806.0" stroke="#000" stroke-width="1" stroke-dasharray="1.5 3"/>
<line x1="440.0" y1="725.0" x2="536.0" y2="803.0" stroke="#000" stroke-width="1" stroke-dasharray="1.5 3"/>
<line x1="587.8" y1="642.0" x2="530.3" y2="780.0" stroke="#d0d0d0" stroke-width="1" />
<line x1="515.6" y1="813.4" x2="493.0" y2="873.0" stroke="#c8c8c8" stroke-width="1" />
<path transform="translate(355.3 731.7) rotate(5)" d="M4.3 0L-4.3 3.44L-1.72 0L-4.3 -3.44Z" fill="#ff9028"/>
<path transform="translate(320.0 746.0) rotate(160)" d="M4.2 0L-4.2 3.36L-1.68 0L-4.2 -3.36Z" fill="#e8f020"/>
<path transform="translate(636.8 662.3) rotate(-10)" d="M3.4 0L-3.4 2.72L-1.36 0L-3.4 -2.72Z" fill="#e8121c"/>
<path transform="translate(604.3 715.3) rotate(0)" d="M3.6 0L-3.6 2.88L-1.44 0L-3.6 -2.88Z" fill="#20d840"/>
<path transform="translate(681.0 785.5) rotate(5)" d="M4.6 0L-4.6 3.68L-1.84 0L-4.6 -3.68Z" fill="#ffffff"/>
<path transform="translate(532.0 806.5) rotate(-90)" d="M3.6 0L-3.6 2.88L-1.44 0L-3.6 -2.88Z" fill="#7a7a7a"/>
<path transform="translate(498.0 830.0) rotate(20)" d="M4.6 0L-4.6 3.68L-1.84 0L-4.6 -3.68Z" fill="#8a8418"/>
<path d="M585 639.6L591.7 637.8L590 640.2Z" fill="#ddd"/>
</svg></div></div>
<div id="ftr"><div class="fb" style="left:2.8px;width:59.2px"><span style="position:absolute;left:8.2px;top:0;letter-spacing:-0.51px">Console</span></div><div class="fb" style="left:66.0px;width:50.0px"><span style="position:absolute;left:7.9px;top:0;letter-spacing:-0.52px">Assets</span></div><div class="fb" style="left:120.3px;width:73.7px"><span style="position:absolute;left:8.3px;top:0;letter-spacing:-0.48px">Comments</span></div><div class="fb" style="left:198.2px;width:54.8px"><span style="position:absolute;left:8.3px;top:0;font-size:11.5px;font-family:'DejaVu Sans',sans-serif">⌘</span><span style="position:absolute;left:21.2px;top:0;letter-spacing:-0.62px">Keys</span></div><div style="position:absolute;left:438.300px;top:1.500px;line-height:22px;font-size:12px;letter-spacing:-.46px;color:#c8cbd6;white-space:nowrap">Last saved</div><div style="position:absolute;left:494.800px;top:1.500px;line-height:22.500px;font-size:10.200px;letter-spacing:-.1px;color:#b9bcc9;white-space:nowrap">FEBRUARY 20, 2024 — 3:54:08 PM</div><div class="fb" style="left:684.0px;width:26.0px"><svg style="position:absolute;left:7.500px;top:5.500px" width="11.5" height="11.5" viewBox="0 0 11.5 11.5"><path d="M4.8 2H1.800Q.8 2 .8 3v6.700q0 1 1 1h6.700q1 0 1-1V6.800M6.3 .8h4.400v4.400M10.5 1L5 6.5" fill="none" stroke="#fff" stroke-width="1.5"/></svg></div><div class="fb" style="left:713.9px;width:50.9px"><span style="position:absolute;left:8.0px;top:0;letter-spacing:-0.19px">Delete</span></div><div class="fb" style="left:768.8px;width:106.8px"><span style="position:absolute;left:8.6px;top:0;letter-spacing:-0.22px">Add to Collection</span></div><div class="fb" style="left:880.1px;width:55.0px"><svg style="position:absolute;left:7.800px;top:6px" width="11" height="8" viewBox="0 0 11 8"><path d="M0 1.300h2.600l4.2 5h3M5.3 3l1.5-1.700h3M8.3 0l1.7 1.3-1.7 1.400zM8.3 5l1.7 1.3-1.7 1.400z" fill="none" stroke="#fff" stroke-width="1.3"/></svg><span style="position:absolute;left:22.6px;top:0;letter-spacing:-0.38px">Fork</span></div><div class="fb" style="left:939.2px;width:51.6px"><span style="position:absolute;left:7.6px;top:0;letter-spacing:-0.66px">Embed</span></div><div class="fb" style="left:995.0px;width:51.8px"><span style="position:absolute;left:8.2px;top:0;letter-spacing:-0.06px">Export</span></div><div class="fb" style="left:1050.9px;width:46.2px"><span style="position:absolute;left:7.6px;top:0;letter-spacing:-0.51px">Share</span></div></div>
</body>
</html>
